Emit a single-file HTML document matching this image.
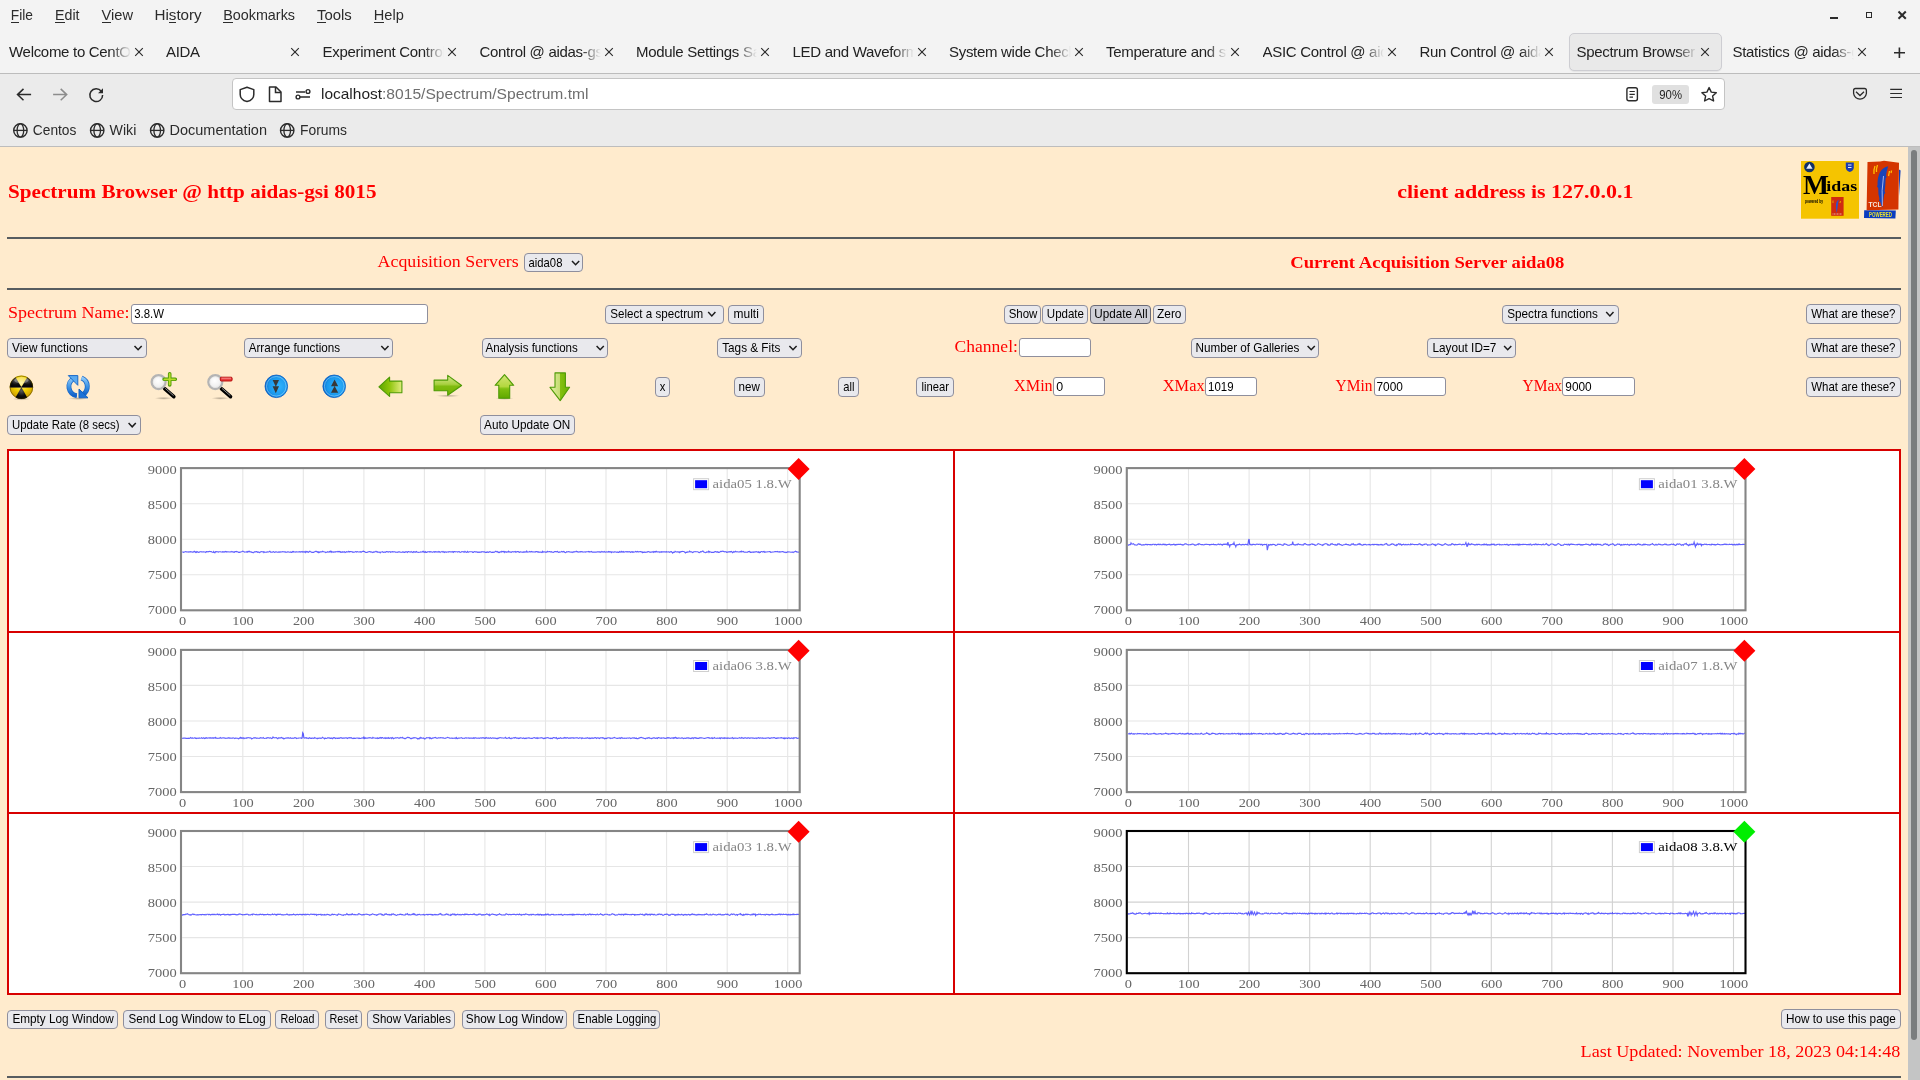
<!DOCTYPE html><html><head><meta charset="utf-8"><style>
*{box-sizing:border-box;margin:0;padding:0}
html,body{width:1920px;height:1080px;overflow:hidden;background:#ffebcd;font-family:"Liberation Sans",sans-serif}
.ab{position:absolute}
.w{position:absolute;background:#e9e9ed;border:1px solid #8f8f9d;border-radius:4px}
.inp{position:absolute;background:#fff;border:1px solid #8f8f9d;border-radius:3px}
.hr{position:absolute;left:7px;width:1894px;height:2px;background:#575c60}
svg{position:absolute;left:0;top:0;overflow:visible;will-change:transform}
</style></head><body>

<div class="ab" style="left:0;top:0;width:1920px;height:73px;background:#f3f3f3"></div>
<div class="ab" style="left:0;top:73px;width:1920px;height:1px;background:#bcbcbc"></div>
<div class="ab" style="left:0;top:74px;width:1920px;height:72px;background:#ebebeb"></div>
<div class="ab" style="left:0;top:146px;width:1920px;height:1px;background:#bdbdbd"></div>
<div class="ab" style="left:10.8px;top:22px;width:8.4px;height:1px;background:#2b2b2b"></div>
<div class="ab" style="left:55.0px;top:22px;width:9.5px;height:1px;background:#2b2b2b"></div>
<div class="ab" style="left:101.5px;top:22px;width:9.8px;height:1px;background:#2b2b2b"></div>
<div class="ab" style="left:168.8px;top:22px;width:7.6px;height:1px;background:#2b2b2b"></div>
<div class="ab" style="left:223.2px;top:22px;width:9.6px;height:1px;background:#2b2b2b"></div>
<div class="ab" style="left:317.0px;top:22px;width:9.1px;height:1px;background:#2b2b2b"></div>
<div class="ab" style="left:373.8px;top:22px;width:10.5px;height:1px;background:#2b2b2b"></div>
<div class="ab" style="left:1830px;top:17px;width:8px;height:2px;background:#2b2b2b"></div>
<div class="ab" style="left:1865.5px;top:12.3px;width:6px;height:6px;border:1.8px solid #2b2b2b"></div>
<svg width="1920" height="30"><path d="M1898.5 11.5L1905.8 18.8M1905.8 11.5L1898.5 18.8" stroke="#2b2b2b" stroke-width="2"/></svg>
<div class="ab" style="left:1568.5px;top:33px;width:153px;height:37.5px;background:#e9e9e9;border:1px solid #cdcdd2;border-radius:5px;box-shadow:0 1px 1px rgba(0,0,0,.06)"></div>
<div class="ab" style="left:9.0px;top:40px;width:122.0px;height:24px;overflow:hidden;white-space:nowrap;font-size:15px;letter-spacing:-0.3px;line-height:24px;color:#222;-webkit-mask-image:linear-gradient(to right,#000 calc(100% - 20px),transparent)">Welcome to CentOS</div>
<svg width="1920" height="80"><path d="M135.2 48.2L142.8 55.8M142.8 48.2L135.2 55.8" stroke="#2b2b2b" stroke-width="1.15"/></svg>
<div class="ab" style="left:166.0px;top:40px;width:121.0px;height:24px;overflow:hidden;white-space:nowrap;font-size:15px;letter-spacing:-0.3px;line-height:24px;color:#222;-webkit-mask-image:linear-gradient(to right,#000 calc(100% - 20px),transparent)">AIDA</div>
<svg width="1920" height="80"><path d="M291.2 48.2L298.8 55.8M298.8 48.2L291.2 55.8" stroke="#2b2b2b" stroke-width="1.15"/></svg>
<div class="ab" style="left:322.5px;top:40px;width:121.5px;height:24px;overflow:hidden;white-space:nowrap;font-size:15px;letter-spacing:-0.3px;line-height:24px;color:#222;-webkit-mask-image:linear-gradient(to right,#000 calc(100% - 20px),transparent)">Experiment Control @</div>
<svg width="1920" height="80"><path d="M448.2 48.2L455.8 55.8M455.8 48.2L448.2 55.8" stroke="#2b2b2b" stroke-width="1.15"/></svg>
<div class="ab" style="left:479.5px;top:40px;width:121.5px;height:24px;overflow:hidden;white-space:nowrap;font-size:15px;letter-spacing:-0.3px;line-height:24px;color:#222;-webkit-mask-image:linear-gradient(to right,#000 calc(100% - 20px),transparent)">Control @ aidas-gsi</div>
<svg width="1920" height="80"><path d="M605.2 48.2L612.8 55.8M612.8 48.2L605.2 55.8" stroke="#2b2b2b" stroke-width="1.15"/></svg>
<div class="ab" style="left:636.0px;top:40px;width:121.0px;height:24px;overflow:hidden;white-space:nowrap;font-size:15px;letter-spacing:-0.3px;line-height:24px;color:#222;-webkit-mask-image:linear-gradient(to right,#000 calc(100% - 20px),transparent)">Module Settings Save</div>
<svg width="1920" height="80"><path d="M761.2 48.2L768.8 55.8M768.8 48.2L761.2 55.8" stroke="#2b2b2b" stroke-width="1.15"/></svg>
<div class="ab" style="left:792.5px;top:40px;width:121.5px;height:24px;overflow:hidden;white-space:nowrap;font-size:15px;letter-spacing:-0.3px;line-height:24px;color:#222;-webkit-mask-image:linear-gradient(to right,#000 calc(100% - 20px),transparent)">LED and Waveform</div>
<svg width="1920" height="80"><path d="M918.2 48.2L925.8 55.8M925.8 48.2L918.2 55.8" stroke="#2b2b2b" stroke-width="1.15"/></svg>
<div class="ab" style="left:949.0px;top:40px;width:122.0px;height:24px;overflow:hidden;white-space:nowrap;font-size:15px;letter-spacing:-0.3px;line-height:24px;color:#222;-webkit-mask-image:linear-gradient(to right,#000 calc(100% - 20px),transparent)">System wide Checks</div>
<svg width="1920" height="80"><path d="M1075.2 48.2L1082.8 55.8M1082.8 48.2L1075.2 55.8" stroke="#2b2b2b" stroke-width="1.15"/></svg>
<div class="ab" style="left:1106.0px;top:40px;width:121.0px;height:24px;overflow:hidden;white-space:nowrap;font-size:15px;letter-spacing:-0.3px;line-height:24px;color:#222;-webkit-mask-image:linear-gradient(to right,#000 calc(100% - 20px),transparent)">Temperature and stat</div>
<svg width="1920" height="80"><path d="M1231.2 48.2L1238.8 55.8M1238.8 48.2L1231.2 55.8" stroke="#2b2b2b" stroke-width="1.15"/></svg>
<div class="ab" style="left:1262.5px;top:40px;width:121.5px;height:24px;overflow:hidden;white-space:nowrap;font-size:15px;letter-spacing:-0.3px;line-height:24px;color:#222;-webkit-mask-image:linear-gradient(to right,#000 calc(100% - 20px),transparent)">ASIC Control @ aidas</div>
<svg width="1920" height="80"><path d="M1388.2 48.2L1395.8 55.8M1395.8 48.2L1388.2 55.8" stroke="#2b2b2b" stroke-width="1.15"/></svg>
<div class="ab" style="left:1419.5px;top:40px;width:121.5px;height:24px;overflow:hidden;white-space:nowrap;font-size:15px;letter-spacing:-0.3px;line-height:24px;color:#222;-webkit-mask-image:linear-gradient(to right,#000 calc(100% - 20px),transparent)">Run Control @ aidas</div>
<svg width="1920" height="80"><path d="M1545.2 48.2L1552.8 55.8M1552.8 48.2L1545.2 55.8" stroke="#2b2b2b" stroke-width="1.15"/></svg>
<div class="ab" style="left:1576.5px;top:40px;width:120.5px;height:24px;overflow:hidden;white-space:nowrap;font-size:15px;letter-spacing:-0.3px;line-height:24px;color:#222;-webkit-mask-image:linear-gradient(to right,#000 calc(100% - 20px),transparent)">Spectrum Browser @</div>
<svg width="1920" height="80"><path d="M1701.2 48.2L1708.8 55.8M1708.8 48.2L1701.2 55.8" stroke="#2b2b2b" stroke-width="1.15"/></svg>
<div class="ab" style="left:1732.5px;top:40px;width:121.5px;height:24px;overflow:hidden;white-space:nowrap;font-size:15px;letter-spacing:-0.3px;line-height:24px;color:#222;-webkit-mask-image:linear-gradient(to right,#000 calc(100% - 20px),transparent)">Statistics @ aidas-gsi</div>
<svg width="1920" height="80"><path d="M1858.2 48.2L1865.8 55.8M1865.8 48.2L1858.2 55.8" stroke="#2b2b2b" stroke-width="1.15"/></svg>

<svg width="1920" height="80"><path d="M1899.4 47.5V58M1894 52.8H1905" stroke="#2b2b2b" stroke-width="1.6"/></svg>
<svg width="1920" height="150"><path d="M31.1 94.6H17.8M23.5 88.9L17.5 94.6L23.5 100.3" fill="none" stroke="#2b2b2b" stroke-width="1.5"/><path d="M53.1 94.6H66.4M60.7 88.9L66.7 94.6L60.7 100.3" fill="none" stroke="#8c8c8c" stroke-width="1.5"/><path d="M101.3 91.3A6.4 6.4 0 1 0 102.6 95" fill="none" stroke="#2b2b2b" stroke-width="1.5"/><path d="M103 88.2V93.2H98Z" fill="#2b2b2b"/></svg>
<div class="ab" style="left:231.5px;top:78.3px;width:1493px;height:31.5px;background:#fff;border:1px solid #c4c4c4;border-radius:4px"></div>
<svg width="1920" height="150"><path d="M247 87.2L253.8 89.6V94.5C253.8 98 251 100.6 247 101.6C243 100.6 240.2 98 240.2 94.5V89.6Z" fill="none" stroke="#2b2b2b" stroke-width="1.5" stroke-linejoin="round"/><path d="M269.5 87H276L281 92V101.5H269.5Z" fill="none" stroke="#2b2b2b" stroke-width="1.5" stroke-linejoin="round"/><path d="M275.5 87V92.5H281" fill="none" stroke="#2b2b2b" stroke-width="1.5"/><path d="M300 97H310M296 92H305" stroke="#2b2b2b" stroke-width="1.5"/><circle cx="298" cy="97" r="1.9" fill="#fff" stroke="#2b2b2b" stroke-width="1.4"/><circle cx="308" cy="91.5" r="1.9" fill="#fff" stroke="#2b2b2b" stroke-width="1.4"/></svg>
<svg width="1920" height="150"><rect x="1626.9" y="87.7" width="10.5" height="13" rx="2" fill="none" stroke="#2b2b2b" stroke-width="1.4"/><path d="M1629.5 91.5H1634.8M1629.5 94.3H1634.8M1629.5 97.1H1633" stroke="#2b2b2b" stroke-width="1.2"/><path d="M1709.1 87.6L1711.3 92.1L1716.3 92.7L1712.6 96.1L1713.6 101L1709.1 98.6L1704.6 101L1705.6 96.1L1701.9 92.7L1706.9 92.1Z" fill="none" stroke="#2b2b2b" stroke-width="1.4" stroke-linejoin="round"/><path d="M1855.5 88.5H1864.5Q1866.4 88.5 1866.4 90.4V93.4A6.45 6.45 0 0 1 1853.6 93.4V90.4Q1853.6 88.5 1855.5 88.5Z" fill="none" stroke="#2b2b2b" stroke-width="1.3" stroke-linejoin="round"/><path d="M1856 91.8L1860 95.5L1864 91.8" fill="none" stroke="#2b2b2b" stroke-width="1.3"/><path d="M1890.2 89.4H1902M1890.2 93.5H1902M1890.2 97.5H1902" stroke="#2b2b2b" stroke-width="1.2"/></svg>
<div class="ab" style="left:1652px;top:84.5px;width:37px;height:19px;background:#e0e0e0;border-radius:3px"></div>
<svg width="1920" height="150"><circle cx="20.4" cy="130.4" r="6.7" fill="none" stroke="#2b2b2b" stroke-width="1.4"/><ellipse cx="20.4" cy="130.4" rx="3.3" ry="6.7" fill="none" stroke="#2b2b2b" stroke-width="1.3"/><path d="M13.7 130.4H27.099999999999998" stroke="#2b2b2b" stroke-width="1.3"/><circle cx="97.2" cy="130.4" r="6.7" fill="none" stroke="#2b2b2b" stroke-width="1.4"/><ellipse cx="97.2" cy="130.4" rx="3.3" ry="6.7" fill="none" stroke="#2b2b2b" stroke-width="1.3"/><path d="M90.5 130.4H103.9" stroke="#2b2b2b" stroke-width="1.3"/><circle cx="157.2" cy="130.4" r="6.7" fill="none" stroke="#2b2b2b" stroke-width="1.4"/><ellipse cx="157.2" cy="130.4" rx="3.3" ry="6.7" fill="none" stroke="#2b2b2b" stroke-width="1.3"/><path d="M150.5 130.4H163.89999999999998" stroke="#2b2b2b" stroke-width="1.3"/><circle cx="287.2" cy="130.4" r="6.7" fill="none" stroke="#2b2b2b" stroke-width="1.4"/><ellipse cx="287.2" cy="130.4" rx="3.3" ry="6.7" fill="none" stroke="#2b2b2b" stroke-width="1.3"/><path d="M280.5 130.4H293.9" stroke="#2b2b2b" stroke-width="1.3"/></svg>
<div class="ab" style="left:1908px;top:147px;width:12px;height:933px;background:#c4c5c5"></div>
<div class="ab" style="left:1911px;top:150px;width:6px;height:890px;background:#7a7d7e;border-radius:3px"></div>
<div class="hr" style="top:237px"></div>
<div class="hr" style="top:288px"></div>
<div class="w" style="left:524.3px;top:253.3px;width:59.1px;height:19.2px;"></div>
<div class="inp" style="left:131.3px;top:304.4px;width:296.4px;height:19.2px;"></div>
<div class="w" style="left:605.3px;top:304.5px;width:118.6px;height:19.1px;"></div>
<div class="w" style="left:728.4px;top:304.5px;width:35.4px;height:19.1px;"></div>
<div class="w" style="left:1004.2px;top:304.5px;width:37.2px;height:19.1px;"></div>
<div class="w" style="left:1042.4px;top:304.5px;width:45.8px;height:19.1px;"></div>
<div class="w" style="left:1089.6px;top:304.5px;width:61.9px;height:19.1px;background:#d0d0d7;border-color:#6b6b78"></div>
<div class="w" style="left:1152.5px;top:304.5px;width:33.1px;height:19.1px;"></div>
<div class="w" style="left:1502.3px;top:304.5px;width:116.5px;height:19.1px;"></div>
<div class="w" style="left:1806.3px;top:304.4px;width:94.4px;height:19.2px;"></div>
<div class="w" style="left:7.4px;top:338.3px;width:139.2px;height:19.4px;"></div>
<div class="w" style="left:244.2px;top:338.3px;width:149.3px;height:19.4px;"></div>
<div class="w" style="left:481.5px;top:338.3px;width:126.9px;height:19.4px;"></div>
<div class="w" style="left:717.4px;top:338.3px;width:84.2px;height:19.4px;"></div>
<div class="inp" style="left:1019.3px;top:338.3px;width:72.2px;height:19.2px;"></div>
<div class="w" style="left:1191.3px;top:338.3px;width:128.1px;height:19.4px;"></div>
<div class="w" style="left:1427.4px;top:338.3px;width:88.9px;height:19.4px;"></div>
<div class="w" style="left:1806.3px;top:338.4px;width:94.4px;height:19.3px;"></div>
<div class="w" style="left:655.1px;top:377.2px;width:14.5px;height:19.4px;"></div>
<div class="w" style="left:734.2px;top:377.2px;width:30.4px;height:19.4px;"></div>
<div class="w" style="left:838.2px;top:377.2px;width:20.4px;height:19.4px;"></div>
<div class="w" style="left:916.2px;top:377.2px;width:37.5px;height:19.4px;"></div>
<div class="inp" style="left:1053.4px;top:377.3px;width:51.4px;height:19.1px;"></div>
<div class="inp" style="left:1205.3px;top:377.3px;width:51.3px;height:19.1px;"></div>
<div class="inp" style="left:1373.6px;top:377.3px;width:72.2px;height:19.1px;"></div>
<div class="inp" style="left:1562.3px;top:377.3px;width:73.1px;height:19.1px;"></div>
<div class="w" style="left:1806.3px;top:377.3px;width:94.4px;height:19.3px;"></div>
<div class="w" style="left:7.2px;top:415.4px;width:133.5px;height:19.2px;"></div>
<div class="w" style="left:480.3px;top:415.2px;width:94.4px;height:19.4px;"></div>

<div class="ab" style="left:7px;top:449px;width:1894px;height:546px;background:#fff;border:2px solid #d80000"></div>
<div class="ab" style="left:953px;top:449px;width:2px;height:546px;background:#d80000"></div>
<div class="ab" style="left:7px;top:631px;width:1894px;height:2px;background:#d80000"></div>
<div class="ab" style="left:7px;top:812px;width:1894px;height:2px;background:#d80000"></div>
<svg width="1920" height="1080" font-family="Liberation Serif" font-size="11.8" fill="#666"><path d="M182.2 503.7H799.2" stroke="#e6e6e6" stroke-width="1.1"/><path d="M182.2 539.2H799.2" stroke="#e6e6e6" stroke-width="1.1"/><path d="M182.2 574.8H799.2" stroke="#e6e6e6" stroke-width="1.1"/><path d="M242.8 468.1V610.3" stroke="#e6e6e6" stroke-width="1.1"/><path d="M303.3 468.1V610.3" stroke="#e6e6e6" stroke-width="1.1"/><path d="M363.9 468.1V610.3" stroke="#e6e6e6" stroke-width="1.1"/><path d="M424.4 468.1V610.3" stroke="#e6e6e6" stroke-width="1.1"/><path d="M484.9 468.1V610.3" stroke="#e6e6e6" stroke-width="1.1"/><path d="M545.5 468.1V610.3" stroke="#e6e6e6" stroke-width="1.1"/><path d="M606.0 468.1V610.3" stroke="#e6e6e6" stroke-width="1.1"/><path d="M666.6 468.1V610.3" stroke="#e6e6e6" stroke-width="1.1"/><path d="M727.2 468.1V610.3" stroke="#e6e6e6" stroke-width="1.1"/><path d="M787.7 468.1V610.3" stroke="#e6e6e6" stroke-width="1.1"/><path d="M182.2 552.0 182.8 552.0 183.4 552.3 184.0 552.1 184.6 552.0 185.2 551.8 185.8 551.6 186.4 552.0 187.0 551.9 187.6 552.0 188.3 551.9 188.9 552.1 189.5 551.8 190.1 551.8 190.7 551.7 191.3 552.0 191.9 551.8 192.5 552.1 193.1 552.2 193.7 551.7 194.3 551.2 194.9 551.8 195.5 552.4 196.1 551.7 196.7 552.3 197.3 551.6 197.9 551.9 198.5 552.3 199.2 552.2 199.8 551.9 200.4 551.8 201.0 551.7 201.6 552.0 202.2 551.8 202.8 552.0 203.4 551.9 204.0 551.9 204.6 552.0 205.2 552.0 205.8 552.4 206.4 551.6 207.0 551.5 207.6 551.9 208.2 551.6 208.8 551.9 209.4 551.4 210.1 551.5 210.7 551.6 211.3 551.6 211.9 552.0 212.5 552.3 213.1 552.4 213.7 551.6 214.3 552.5 214.9 552.8 215.5 551.7 216.1 551.8 216.7 551.7 217.3 551.8 217.9 551.9 218.5 552.1 219.1 551.8 219.7 551.7 220.3 551.7 221.0 551.9 221.6 552.0 222.2 552.1 222.8 551.7 223.4 551.9 224.0 552.1 224.6 551.9 225.2 551.5 225.8 551.8 226.4 551.6 227.0 552.0 227.6 551.7 228.2 551.7 228.8 552.0 229.4 552.0 230.0 551.9 230.6 551.9 231.2 552.0 231.9 551.5 232.5 552.0 233.1 551.9 233.7 552.1 234.3 552.3 234.9 551.6 235.5 551.6 236.1 551.9 236.7 551.4 237.3 551.7 237.9 552.0 238.5 552.3 239.1 552.1 239.7 552.4 240.3 552.1 240.9 552.0 241.5 551.7 242.1 551.5 242.8 551.1 243.4 551.5 244.0 551.7 244.6 552.1 245.2 552.0 245.8 552.0 246.4 552.2 247.0 551.6 247.6 552.2 248.2 551.3 248.8 551.7 249.4 551.2 250.0 551.9 250.6 551.8 251.2 551.8 251.8 552.4 252.4 552.3 253.0 552.7 253.6 552.6 254.3 551.9 254.9 551.9 255.5 551.9 256.1 551.6 256.7 551.6 257.3 552.2 257.9 551.9 258.5 552.1 259.1 552.4 259.7 552.6 260.3 552.0 260.9 551.7 261.5 551.6 262.1 551.7 262.7 551.8 263.3 551.7 263.9 552.5 264.5 551.9 265.2 552.2 265.8 552.2 266.4 552.1 267.0 552.1 267.6 551.8 268.2 552.0 268.8 552.0 269.4 551.3 270.0 551.3 270.6 552.1 271.2 552.1 271.8 552.2 272.4 552.2 273.0 551.8 273.6 551.6 274.2 552.3 274.8 552.4 275.4 551.8 276.1 552.0 276.7 551.9 277.3 552.2 277.9 552.2 278.5 551.9 279.1 552.2 279.7 551.9 280.3 552.1 280.9 551.8 281.5 552.0 282.1 551.9 282.7 551.6 283.3 551.7 283.9 551.8 284.5 551.8 285.1 552.2 285.7 551.9 286.3 552.2 287.0 552.1 287.6 551.8 288.2 552.0 288.8 551.9 289.4 552.2 290.0 552.2 290.6 551.9 291.2 552.3 291.8 552.3 292.4 551.5 293.0 552.0 293.6 551.5 294.2 552.0 294.8 552.0 295.4 552.1 296.0 551.8 296.6 551.8 297.2 551.9 297.9 552.0 298.5 551.9 299.1 552.0 299.7 551.7 300.3 551.9 300.9 552.2 301.5 551.8 302.1 551.5 302.7 552.1 303.3 551.9 303.9 551.9 304.5 552.1 305.1 551.5 305.7 552.5 306.3 551.8 306.9 551.5 307.5 551.8 308.1 552.3 308.7 552.2 309.4 551.3 310.0 551.4 310.6 551.8 311.2 552.0 311.8 552.3 312.4 552.3 313.0 552.3 313.6 552.3 314.2 552.0 314.8 551.7 315.4 551.4 316.0 551.1 316.6 551.6 317.2 552.0 317.8 551.8 318.4 552.6 319.0 551.9 319.6 552.4 320.3 551.8 320.9 551.8 321.5 551.9 322.1 551.7 322.7 551.2 323.3 551.7 323.9 551.7 324.5 552.0 325.1 552.0 325.7 552.5 326.3 552.2 326.9 552.2 327.5 551.8 328.1 552.2 328.7 552.0 329.3 551.5 329.9 552.0 330.5 551.2 331.2 552.3 331.8 551.4 332.4 551.9 333.0 552.2 333.6 551.9 334.2 552.2 334.8 551.8 335.4 552.0 336.0 551.6 336.6 551.7 337.2 551.9 337.8 551.5 338.4 551.8 339.0 551.4 339.6 551.6 340.2 552.2 340.8 551.7 341.4 552.1 342.1 552.3 342.7 551.7 343.3 552.1 343.9 552.0 344.5 551.7 345.1 552.5 345.7 552.3 346.3 551.8 346.9 551.7 347.5 552.0 348.1 552.0 348.7 551.3 349.3 552.0 349.9 551.6 350.5 551.6 351.1 551.5 351.7 551.7 352.3 551.9 353.0 552.3 353.6 552.0 354.2 552.2 354.8 552.0 355.4 551.6 356.0 551.7 356.6 552.1 357.2 551.7 357.8 551.8 358.4 552.0 359.0 552.0 359.6 551.9 360.2 551.7 360.8 552.1 361.4 552.1 362.0 551.6 362.6 551.5 363.2 551.1 363.9 551.4 364.5 551.6 365.1 552.1 365.7 552.4 366.3 552.5 366.9 552.4 367.5 552.3 368.1 551.9 368.7 551.8 369.3 551.5 369.9 551.6 370.5 552.0 371.1 551.8 371.7 552.1 372.3 552.2 372.9 552.5 373.5 552.0 374.1 552.2 374.7 551.9 375.4 551.8 376.0 551.2 376.6 551.8 377.2 551.7 377.8 552.3 378.4 552.0 379.0 552.2 379.6 552.1 380.2 552.8 380.8 552.0 381.4 552.0 382.0 552.0 382.6 551.7 383.2 552.2 383.8 552.4 384.4 552.1 385.0 552.0 385.6 552.3 386.3 551.5 386.9 551.6 387.5 551.8 388.1 552.2 388.7 551.9 389.3 551.7 389.9 551.6 390.5 552.2 391.1 551.9 391.7 552.0 392.3 551.7 392.9 551.9 393.5 551.9 394.1 551.7 394.7 551.7 395.3 552.2 395.9 552.0 396.5 552.2 397.2 552.1 397.8 552.4 398.4 551.9 399.0 551.7 399.6 552.0 400.2 552.1 400.8 552.2 401.4 552.2 402.0 552.4 402.6 551.8 403.2 551.9 403.8 552.4 404.4 552.2 405.0 552.4 405.6 551.8 406.2 551.6 406.8 552.1 407.4 552.5 408.1 551.6 408.7 551.5 409.3 551.9 409.9 552.0 410.5 552.1 411.1 551.6 411.7 552.1 412.3 552.3 412.9 552.6 413.5 551.6 414.1 551.7 414.7 552.1 415.3 551.9 415.9 552.1 416.5 551.5 417.1 551.9 417.7 552.2 418.3 552.4 419.0 552.3 419.6 552.2 420.2 552.1 420.8 551.9 421.4 552.0 422.0 552.1 422.6 551.6 423.2 551.3 423.8 552.1 424.4 551.9 425.0 552.4 425.6 551.7 426.2 552.4 426.8 552.4 427.4 551.9 428.0 551.9 428.6 551.8 429.2 551.7 429.8 552.1 430.5 551.7 431.1 552.0 431.7 551.8 432.3 552.2 432.9 552.2 433.5 551.8 434.1 551.6 434.7 552.2 435.3 551.6 435.9 551.8 436.5 551.8 437.1 552.1 437.7 551.8 438.3 552.1 438.9 551.5 439.5 551.8 440.1 552.4 440.7 551.9 441.4 551.7 442.0 551.5 442.6 551.9 443.2 552.1 443.8 551.6 444.4 552.4 445.0 552.0 445.6 551.8 446.2 552.3 446.8 552.0 447.4 552.0 448.0 551.8 448.6 552.1 449.2 551.7 449.8 551.8 450.4 551.9 451.0 551.8 451.6 551.8 452.3 552.0 452.9 551.6 453.5 552.3 454.1 551.5 454.7 551.6 455.3 551.8 455.9 551.7 456.5 551.7 457.1 551.7 457.7 552.0 458.3 551.7 458.9 551.6 459.5 551.8 460.1 552.4 460.7 552.3 461.3 552.0 461.9 551.6 462.5 551.7 463.2 551.6 463.8 552.1 464.4 552.2 465.0 551.4 465.6 551.9 466.2 552.4 466.8 552.3 467.4 551.5 468.0 552.1 468.6 552.1 469.2 551.7 469.8 551.7 470.4 551.7 471.0 551.7 471.6 551.8 472.2 551.9 472.8 552.3 473.4 552.3 474.1 551.8 474.7 551.7 475.3 551.8 475.9 552.1 476.5 551.9 477.1 551.9 477.7 552.4 478.3 552.4 478.9 551.9 479.5 552.3 480.1 552.1 480.7 552.1 481.3 552.2 481.9 551.6 482.5 551.8 483.1 551.9 483.7 551.9 484.3 551.8 484.9 552.1 485.6 552.3 486.2 552.2 486.8 552.3 487.4 551.9 488.0 552.1 488.6 552.3 489.2 552.0 489.8 551.7 490.4 551.8 491.0 552.2 491.6 552.3 492.2 552.3 492.8 552.2 493.4 552.3 494.0 552.0 494.6 552.1 495.2 551.6 495.8 551.2 496.5 551.8 497.1 551.9 497.7 551.5 498.3 552.6 498.9 552.3 499.5 552.5 500.1 551.9 500.7 551.9 501.3 552.1 501.9 551.3 502.5 551.7 503.1 551.6 503.7 551.5 504.3 552.5 504.9 551.5 505.5 552.0 506.1 551.8 506.7 552.2 507.4 551.8 508.0 552.0 508.6 551.2 509.2 552.0 509.8 551.8 510.4 552.1 511.0 552.0 511.6 552.3 512.2 551.7 512.8 551.8 513.4 551.9 514.0 551.9 514.6 551.8 515.2 551.5 515.8 552.3 516.4 551.9 517.0 551.5 517.6 551.6 518.3 551.5 518.9 552.2 519.5 552.3 520.1 551.9 520.7 551.8 521.3 552.0 521.9 552.2 522.5 552.1 523.1 552.3 523.7 551.9 524.3 551.8 524.9 552.2 525.5 551.8 526.1 552.0 526.7 551.1 527.3 552.1 527.9 552.0 528.5 552.0 529.2 551.9 529.8 551.4 530.4 551.9 531.0 552.0 531.6 551.5 532.2 552.0 532.8 551.9 533.4 552.0 534.0 551.8 534.6 552.0 535.2 552.2 535.8 551.6 536.4 551.6 537.0 551.6 537.6 552.1 538.2 551.7 538.8 552.3 539.4 552.1 540.1 552.1 540.7 552.1 541.3 552.2 541.9 552.5 542.5 551.4 543.1 552.2 543.7 551.8 544.3 551.8 544.9 552.0 545.5 552.1 546.1 552.1 546.7 552.1 547.3 551.4 547.9 551.9 548.5 551.7 549.1 551.6 549.7 551.5 550.3 551.8 550.9 552.1 551.6 551.7 552.2 552.2 552.8 552.2 553.4 552.4 554.0 552.0 554.6 551.6 555.2 551.6 555.8 551.6 556.4 551.9 557.0 551.6 557.6 551.4 558.2 552.3 558.8 552.4 559.4 551.9 560.0 552.2 560.6 552.0 561.2 551.7 561.8 551.4 562.5 551.8 563.1 551.8 563.7 551.5 564.3 551.8 564.9 552.5 565.5 552.6 566.1 552.2 566.7 551.7 567.3 552.0 567.9 551.8 568.5 551.7 569.1 551.9 569.7 551.8 570.3 552.2 570.9 552.0 571.5 552.0 572.1 552.5 572.7 552.1 573.4 552.1 574.0 551.7 574.6 551.9 575.2 551.7 575.8 551.6 576.4 551.2 577.0 551.8 577.6 551.6 578.2 552.0 578.8 552.1 579.4 551.8 580.0 551.8 580.6 551.6 581.2 551.8 581.8 551.5 582.4 551.7 583.0 552.1 583.6 552.0 584.3 552.0 584.9 551.8 585.5 552.1 586.1 551.9 586.7 551.8 587.3 551.7 587.9 551.7 588.5 551.5 589.1 552.1 589.7 551.7 590.3 551.9 590.9 551.7 591.5 551.5 592.1 552.1 592.7 552.0 593.3 552.1 593.9 552.1 594.5 552.1 595.2 552.1 595.8 552.0 596.4 552.2 597.0 551.8 597.6 551.9 598.2 551.9 598.8 551.9 599.4 552.1 600.0 551.7 600.6 552.3 601.2 552.1 601.8 551.5 602.4 551.8 603.0 552.1 603.6 552.0 604.2 551.5 604.8 552.0 605.4 552.1 606.0 552.0 606.7 551.8 607.3 552.0 607.9 552.2 608.5 551.6 609.1 552.0 609.7 551.7 610.3 552.0 610.9 551.7 611.5 552.5 612.1 551.8 612.7 552.0 613.3 552.1 613.9 552.2 614.5 551.9 615.1 551.8 615.7 552.0 616.3 552.0 616.9 552.4 617.6 552.0 618.2 552.5 618.8 552.4 619.4 551.6 620.0 552.0 620.6 552.1 621.2 551.3 621.8 552.0 622.4 551.6 623.0 552.1 623.6 551.5 624.2 552.1 624.8 552.0 625.4 551.8 626.0 551.7 626.6 551.8 627.2 551.7 627.8 551.8 628.5 551.8 629.1 551.7 629.7 551.8 630.3 552.3 630.9 552.1 631.5 551.9 632.1 551.7 632.7 552.2 633.3 551.9 633.9 552.1 634.5 552.0 635.1 551.8 635.7 551.5 636.3 551.8 636.9 551.8 637.5 551.5 638.1 551.8 638.7 551.8 639.4 551.7 640.0 551.5 640.6 551.6 641.2 551.8 641.8 551.8 642.4 552.6 643.0 552.0 643.6 552.5 644.2 552.4 644.8 552.0 645.4 552.3 646.0 552.2 646.6 552.1 647.2 552.1 647.8 551.6 648.4 551.6 649.0 551.7 649.6 552.1 650.3 552.0 650.9 552.4 651.5 552.0 652.1 551.9 652.7 551.9 653.3 552.4 653.9 551.5 654.5 552.0 655.1 551.5 655.7 552.0 656.3 551.4 656.9 552.0 657.5 551.9 658.1 552.0 658.7 551.9 659.3 551.9 659.9 552.4 660.5 551.9 661.2 551.6 661.8 552.3 662.4 551.8 663.0 551.8 663.6 551.8 664.2 551.9 664.8 551.9 665.4 551.9 666.0 552.1 666.6 551.6 667.2 552.0 667.8 552.0 668.4 551.9 669.0 551.9 669.6 552.4 670.2 552.1 670.8 551.6 671.4 551.6 672.0 552.3 672.7 553.1 673.3 552.1 673.9 552.3 674.5 552.2 675.1 551.3 675.7 551.7 676.3 552.0 676.9 551.8 677.5 551.8 678.1 551.8 678.7 552.1 679.3 552.6 679.9 551.8 680.5 552.1 681.1 551.6 681.7 551.6 682.3 551.4 682.9 551.5 683.6 551.5 684.2 551.7 684.8 552.2 685.4 552.9 686.0 552.3 686.6 552.3 687.2 551.9 687.8 552.1 688.4 552.0 689.0 551.9 689.6 551.1 690.2 551.7 690.8 551.8 691.4 551.8 692.0 552.1 692.6 552.6 693.2 552.3 693.8 551.8 694.5 551.7 695.1 551.6 695.7 551.7 696.3 551.7 696.9 551.7 697.5 551.7 698.1 551.9 698.7 552.5 699.3 552.6 699.9 552.2 700.5 551.7 701.1 551.9 701.7 551.8 702.3 551.3 702.9 551.0 703.5 551.8 704.1 552.2 704.7 552.2 705.4 552.7 706.0 552.4 706.6 552.0 707.2 552.2 707.8 551.9 708.4 551.2 709.0 552.4 709.6 551.5 710.2 552.0 710.8 552.0 711.4 552.4 712.0 552.4 712.6 552.4 713.2 552.3 713.8 552.3 714.4 551.9 715.0 551.5 715.6 551.5 716.3 551.9 716.9 552.1 717.5 551.8 718.1 552.4 718.7 552.2 719.3 552.3 719.9 551.9 720.5 551.4 721.1 551.6 721.7 551.4 722.3 551.1 722.9 551.4 723.5 551.4 724.1 551.6 724.7 551.9 725.3 551.8 725.9 551.6 726.5 552.3 727.2 552.0 727.8 552.1 728.4 552.0 729.0 551.7 729.6 551.8 730.2 551.6 730.8 551.8 731.4 551.4 732.0 552.0 732.6 552.7 733.2 552.4 733.8 551.6 734.4 552.1 735.0 551.7 735.6 551.3 736.2 551.9 736.8 551.7 737.4 551.7 738.0 551.9 738.7 552.0 739.3 551.9 739.9 551.9 740.5 551.5 741.1 552.0 741.7 551.2 742.3 551.7 742.9 551.7 743.5 551.4 744.1 552.2 744.7 552.2 745.3 552.1 745.9 552.2 746.5 552.2 747.1 552.0 747.7 552.1 748.3 551.5 748.9 551.6 749.6 551.4 750.2 552.3 750.8 552.1 751.4 552.4 752.0 552.1 752.6 552.1 753.2 552.4 753.8 552.0 754.4 552.2 755.0 551.8 755.6 551.8 756.2 551.9 756.8 551.6 757.4 552.0 758.0 552.3 758.6 551.9 759.2 552.7 759.8 552.2 760.5 552.3 761.1 551.5 761.7 551.5 762.3 551.8 762.9 552.1 763.5 551.5 764.1 551.4 764.7 552.3 765.3 552.1 765.9 551.8 766.5 552.0 767.1 552.0 767.7 551.8 768.3 551.7 768.9 551.7 769.5 551.5 770.1 551.6 770.7 552.4 771.4 552.2 772.0 552.1 772.6 552.0 773.2 552.0 773.8 552.0 774.4 551.7 775.0 551.6 775.6 551.6 776.2 551.6 776.8 551.7 777.4 551.5 778.0 551.9 778.6 552.0 779.2 551.7 779.8 552.1 780.4 551.9 781.0 551.9 781.6 551.8 782.3 551.5 782.9 551.6 783.5 551.9 784.1 552.1 784.7 552.4 785.3 552.1 785.9 552.6 786.5 552.4 787.1 552.1 787.7 551.9 788.3 552.0 788.9 551.8 789.5 552.0 790.1 552.0 790.7 552.2 791.3 552.2 791.9 552.0 792.5 552.1 793.1 552.5 793.8 552.0 794.4 552.0 795.0 551.4 795.6 551.1 796.2 551.8 796.8 551.6 797.4 552.0 798.0 552.2 798.6 552.2 799.2 551.7" fill="none" stroke="#0000ff" stroke-opacity="0.62" stroke-width="1.15"/><rect x="181.0" y="468.1" width="618.7" height="142.2" fill="none" stroke="#858585" stroke-width="2.1"/><text x="147.8" y="473.9" textLength="28.9" lengthAdjust="spacingAndGlyphs">9000</text><text x="147.8" y="508.9" textLength="28.9" lengthAdjust="spacingAndGlyphs">8500</text><text x="147.8" y="543.9" textLength="28.9" lengthAdjust="spacingAndGlyphs">8000</text><text x="147.8" y="578.9" textLength="28.9" lengthAdjust="spacingAndGlyphs">7500</text><text x="147.8" y="613.9" textLength="28.9" lengthAdjust="spacingAndGlyphs">7000</text><text x="178.9" y="624.9" textLength="7.2" lengthAdjust="spacingAndGlyphs">0</text><text x="232.3" y="624.9" textLength="21.5" lengthAdjust="spacingAndGlyphs">100</text><text x="292.9" y="624.9" textLength="21.5" lengthAdjust="spacingAndGlyphs">200</text><text x="353.4" y="624.9" textLength="21.5" lengthAdjust="spacingAndGlyphs">300</text><text x="414.0" y="624.9" textLength="21.5" lengthAdjust="spacingAndGlyphs">400</text><text x="474.5" y="624.9" textLength="21.5" lengthAdjust="spacingAndGlyphs">500</text><text x="535.1" y="624.9" textLength="21.5" lengthAdjust="spacingAndGlyphs">600</text><text x="595.6" y="624.9" textLength="21.5" lengthAdjust="spacingAndGlyphs">700</text><text x="656.2" y="624.9" textLength="21.5" lengthAdjust="spacingAndGlyphs">800</text><text x="716.7" y="624.9" textLength="21.5" lengthAdjust="spacingAndGlyphs">900</text><text x="773.7" y="624.9" textLength="28.6" lengthAdjust="spacingAndGlyphs">1000</text><rect x="693.6" y="478.7" width="15" height="11" fill="#fff" stroke="#cfcfcf" stroke-width="1"/><rect x="695.1" y="480.2" width="12" height="8" fill="#0000ff"/><text x="712.5" y="488.1" fill="#858585" textLength="79.1" lengthAdjust="spacingAndGlyphs">aida05 1.8.W</text><path d="M798.6 457.9L809.6 468.9L798.6 479.9L787.6 468.9Z" fill="#ff0000"/></svg>
<svg width="1920" height="1080" font-family="Liberation Serif" font-size="11.8" fill="#666"><path d="M1128.0 503.7H1745.0" stroke="#e6e6e6" stroke-width="1.1"/><path d="M1128.0 539.2H1745.0" stroke="#e6e6e6" stroke-width="1.1"/><path d="M1128.0 574.8H1745.0" stroke="#e6e6e6" stroke-width="1.1"/><path d="M1188.5 468.1V610.3" stroke="#e6e6e6" stroke-width="1.1"/><path d="M1249.1 468.1V610.3" stroke="#e6e6e6" stroke-width="1.1"/><path d="M1309.7 468.1V610.3" stroke="#e6e6e6" stroke-width="1.1"/><path d="M1370.2 468.1V610.3" stroke="#e6e6e6" stroke-width="1.1"/><path d="M1430.8 468.1V610.3" stroke="#e6e6e6" stroke-width="1.1"/><path d="M1491.3 468.1V610.3" stroke="#e6e6e6" stroke-width="1.1"/><path d="M1551.8 468.1V610.3" stroke="#e6e6e6" stroke-width="1.1"/><path d="M1612.4 468.1V610.3" stroke="#e6e6e6" stroke-width="1.1"/><path d="M1673.0 468.1V610.3" stroke="#e6e6e6" stroke-width="1.1"/><path d="M1733.5 468.1V610.3" stroke="#e6e6e6" stroke-width="1.1"/><path d="M1128.0 544.5 1128.6 545.2 1129.2 544.7 1129.8 544.6 1130.4 544.6 1131.0 542.9 1131.6 544.0 1132.2 544.0 1132.8 544.1 1133.4 543.7 1134.1 544.4 1134.7 544.9 1135.3 545.0 1135.9 544.8 1136.5 545.2 1137.1 544.9 1137.7 544.5 1138.3 543.9 1138.9 543.9 1139.5 544.3 1140.1 544.2 1140.7 544.6 1141.3 544.9 1141.9 545.1 1142.5 544.9 1143.1 545.0 1143.7 544.7 1144.3 544.8 1145.0 544.6 1145.6 544.4 1146.2 544.4 1146.8 544.6 1147.4 544.8 1148.0 544.4 1148.6 544.5 1149.2 544.6 1149.8 544.5 1150.4 544.9 1151.0 544.4 1151.6 544.9 1152.2 544.7 1152.8 544.2 1153.4 544.2 1154.0 544.2 1154.6 544.7 1155.2 544.3 1155.9 544.6 1156.5 545.0 1157.1 544.5 1157.7 544.4 1158.3 544.6 1158.9 544.1 1159.5 544.7 1160.1 544.7 1160.7 544.3 1161.3 544.7 1161.9 544.7 1162.5 544.6 1163.1 544.0 1163.7 544.4 1164.3 544.7 1164.9 544.1 1165.5 544.4 1166.1 545.1 1166.8 544.5 1167.4 544.6 1168.0 544.5 1168.6 544.3 1169.2 544.4 1169.8 544.2 1170.4 544.8 1171.0 544.8 1171.6 544.6 1172.2 544.5 1172.8 544.7 1173.4 544.4 1174.0 544.2 1174.6 544.8 1175.2 544.7 1175.8 545.0 1176.4 544.5 1177.0 544.7 1177.7 544.4 1178.3 544.3 1178.9 544.3 1179.5 544.4 1180.1 544.5 1180.7 544.2 1181.3 544.7 1181.9 544.6 1182.5 545.0 1183.1 544.7 1183.7 544.9 1184.3 544.4 1184.9 543.8 1185.5 543.9 1186.1 543.9 1186.7 544.2 1187.3 544.5 1187.9 544.7 1188.5 544.9 1189.2 544.8 1189.8 544.7 1190.4 544.6 1191.0 544.6 1191.6 544.2 1192.2 544.1 1192.8 544.0 1193.4 544.2 1194.0 544.5 1194.6 545.1 1195.2 544.9 1195.8 545.2 1196.4 545.0 1197.0 544.6 1197.6 544.2 1198.2 544.7 1198.8 543.7 1199.4 543.9 1200.1 544.2 1200.7 544.5 1201.3 544.6 1201.9 544.6 1202.5 544.5 1203.1 544.7 1203.7 544.8 1204.3 544.7 1204.9 544.4 1205.5 544.5 1206.1 544.1 1206.7 544.5 1207.3 544.5 1207.9 544.4 1208.5 544.5 1209.1 544.6 1209.7 545.0 1210.3 544.5 1211.0 544.6 1211.6 544.4 1212.2 544.5 1212.8 544.4 1213.4 544.2 1214.0 544.6 1214.6 544.6 1215.2 544.6 1215.8 544.6 1216.4 544.8 1217.0 544.7 1217.6 544.4 1218.2 544.0 1218.8 544.4 1219.4 544.6 1220.0 544.2 1220.6 544.1 1221.2 544.7 1221.9 544.4 1222.5 545.2 1223.1 544.5 1223.7 544.2 1224.3 544.4 1224.9 544.2 1225.5 544.3 1226.1 544.0 1226.7 544.5 1227.3 544.9 1227.9 542.2 1228.5 544.8 1229.1 544.8 1229.7 546.6 1230.3 544.8 1230.9 544.6 1231.5 544.6 1232.1 544.5 1232.8 543.9 1233.4 544.3 1234.0 542.7 1234.6 544.8 1235.2 545.1 1235.8 546.7 1236.4 545.0 1237.0 544.6 1237.6 544.8 1238.2 544.5 1238.8 544.6 1239.4 544.0 1240.0 544.6 1240.6 544.8 1241.2 545.1 1241.8 544.5 1242.4 544.6 1243.0 544.3 1243.7 544.6 1244.3 544.8 1244.9 544.5 1245.5 544.3 1246.1 544.3 1246.7 544.7 1247.3 544.5 1247.9 544.9 1248.5 540.7 1249.1 539.0 1249.7 544.5 1250.3 544.8 1250.9 544.2 1251.5 544.8 1252.1 544.8 1252.7 544.4 1253.3 544.3 1253.9 544.4 1254.5 544.5 1255.2 544.8 1255.8 544.5 1256.4 544.1 1257.0 544.4 1257.6 544.1 1258.2 544.5 1258.8 544.4 1259.4 544.3 1260.0 544.1 1260.6 544.8 1261.2 544.5 1261.8 544.3 1262.4 545.3 1263.0 544.7 1263.6 544.6 1264.2 544.6 1264.8 544.4 1265.4 544.5 1266.1 544.6 1266.7 544.3 1267.3 550.1 1267.9 547.7 1268.5 544.7 1269.1 544.8 1269.7 545.2 1270.3 544.5 1270.9 544.8 1271.5 544.7 1272.1 544.9 1272.7 544.3 1273.3 544.3 1273.9 544.5 1274.5 544.6 1275.1 544.9 1275.7 545.5 1276.3 545.3 1277.0 545.1 1277.6 544.3 1278.2 544.1 1278.8 544.4 1279.4 544.5 1280.0 544.2 1280.6 544.5 1281.2 544.7 1281.8 544.9 1282.4 545.1 1283.0 545.4 1283.6 544.9 1284.2 543.8 1284.8 544.1 1285.4 544.0 1286.0 544.2 1286.6 544.4 1287.2 545.0 1287.9 545.1 1288.5 545.2 1289.1 545.4 1289.7 545.1 1290.3 544.8 1290.9 544.6 1291.5 544.7 1292.1 544.3 1292.7 541.5 1293.3 544.3 1293.9 544.6 1294.5 544.8 1295.1 544.6 1295.7 545.0 1296.3 544.8 1296.9 544.4 1297.5 544.7 1298.1 543.8 1298.8 544.3 1299.4 544.6 1300.0 544.3 1300.6 544.7 1301.2 544.7 1301.8 544.9 1302.4 544.8 1303.0 544.8 1303.6 544.9 1304.2 543.7 1304.8 543.9 1305.4 543.6 1306.0 544.2 1306.6 544.4 1307.2 544.8 1307.8 544.9 1308.4 544.9 1309.0 544.6 1309.7 544.9 1310.3 544.7 1310.9 544.3 1311.5 544.0 1312.1 543.9 1312.7 544.3 1313.3 544.3 1313.9 544.4 1314.5 544.9 1315.1 545.1 1315.7 545.4 1316.3 544.9 1316.9 544.7 1317.5 544.4 1318.1 543.7 1318.7 543.8 1319.3 544.1 1319.9 544.3 1320.5 544.5 1321.2 544.8 1321.8 545.0 1322.4 545.4 1323.0 544.7 1323.6 544.8 1324.2 544.1 1324.8 544.0 1325.4 543.8 1326.0 543.6 1326.6 544.0 1327.2 544.1 1327.8 545.0 1328.4 544.7 1329.0 545.4 1329.6 545.1 1330.2 544.9 1330.8 544.0 1331.4 544.2 1332.1 543.6 1332.7 544.3 1333.3 544.5 1333.9 544.4 1334.5 544.8 1335.1 545.1 1335.7 544.5 1336.3 544.9 1336.9 545.2 1337.5 544.0 1338.1 544.3 1338.7 543.8 1339.3 543.8 1339.9 544.6 1340.5 544.6 1341.1 544.8 1341.7 545.3 1342.3 545.4 1343.0 545.1 1343.6 544.7 1344.2 544.7 1344.8 544.5 1345.4 544.2 1346.0 544.3 1346.6 544.1 1347.2 544.6 1347.8 544.6 1348.4 544.6 1349.0 545.1 1349.6 545.1 1350.2 545.0 1350.8 545.1 1351.4 544.0 1352.0 544.0 1352.6 544.3 1353.2 543.6 1353.9 544.7 1354.5 544.8 1355.1 544.6 1355.7 545.0 1356.3 545.0 1356.9 544.7 1357.5 544.6 1358.1 543.9 1358.7 544.3 1359.3 543.6 1359.9 544.5 1360.5 544.0 1361.1 544.9 1361.7 544.9 1362.3 545.2 1362.9 545.2 1363.5 544.5 1364.1 544.7 1364.8 544.4 1365.4 544.3 1366.0 544.8 1366.6 544.9 1367.2 544.8 1367.8 544.7 1368.4 544.7 1369.0 544.4 1369.6 544.5 1370.2 545.1 1370.8 544.7 1371.4 544.7 1372.0 544.5 1372.6 544.4 1373.2 544.8 1373.8 544.4 1374.4 544.6 1375.0 544.4 1375.6 544.5 1376.3 544.3 1376.9 544.8 1377.5 544.4 1378.1 545.0 1378.7 544.7 1379.3 544.8 1379.9 544.7 1380.5 544.4 1381.1 544.8 1381.7 544.4 1382.3 545.0 1382.9 544.8 1383.5 545.0 1384.1 544.7 1384.7 544.1 1385.3 543.8 1385.9 544.0 1386.5 543.5 1387.2 544.4 1387.8 545.1 1388.4 545.0 1389.0 545.1 1389.6 545.1 1390.2 545.0 1390.8 544.4 1391.4 544.5 1392.0 543.7 1392.6 543.9 1393.2 544.4 1393.8 544.2 1394.4 545.0 1395.0 545.1 1395.6 545.2 1396.2 545.6 1396.8 544.5 1397.4 544.9 1398.1 544.2 1398.7 543.7 1399.3 544.0 1399.9 544.7 1400.5 544.1 1401.1 544.5 1401.7 545.1 1402.3 544.6 1402.9 544.6 1403.5 544.1 1404.1 544.5 1404.7 544.8 1405.3 544.6 1405.9 544.4 1406.5 544.8 1407.1 544.9 1407.7 544.5 1408.3 544.4 1409.0 544.6 1409.6 544.7 1410.2 544.8 1410.8 543.9 1411.4 544.6 1412.0 544.3 1412.6 544.2 1413.2 544.4 1413.8 544.5 1414.4 544.6 1415.0 544.6 1415.6 544.5 1416.2 544.5 1416.8 544.6 1417.4 544.5 1418.0 544.7 1418.6 544.1 1419.2 544.1 1419.9 543.7 1420.5 544.6 1421.1 544.8 1421.7 544.6 1422.3 545.2 1422.9 544.9 1423.5 544.8 1424.1 544.2 1424.7 544.5 1425.3 544.0 1425.9 544.0 1426.5 544.1 1427.1 544.6 1427.7 545.3 1428.3 544.8 1428.9 545.0 1429.5 544.8 1430.1 545.0 1430.8 544.8 1431.4 544.4 1432.0 544.1 1432.6 543.8 1433.2 544.2 1433.8 544.6 1434.4 545.0 1435.0 544.4 1435.6 545.6 1436.2 545.0 1436.8 544.7 1437.4 544.1 1438.0 544.0 1438.6 543.9 1439.2 544.3 1439.8 544.4 1440.4 544.6 1441.0 544.5 1441.6 545.2 1442.3 545.4 1442.9 544.8 1443.5 544.9 1444.1 544.5 1444.7 544.0 1445.3 543.6 1445.9 544.0 1446.5 544.3 1447.1 544.7 1447.7 544.9 1448.3 545.1 1448.9 545.1 1449.5 544.9 1450.1 544.8 1450.7 545.0 1451.3 544.5 1451.9 543.6 1452.5 543.8 1453.2 544.4 1453.8 544.3 1454.4 545.0 1455.0 544.6 1455.6 544.4 1456.2 544.7 1456.8 544.6 1457.4 544.6 1458.0 544.5 1458.6 544.3 1459.2 544.3 1459.8 544.2 1460.4 544.3 1461.0 544.5 1461.6 544.9 1462.2 544.7 1462.8 544.3 1463.4 544.3 1464.1 544.6 1464.7 544.7 1465.3 544.0 1465.9 542.6 1466.5 544.7 1467.1 546.9 1467.7 544.4 1468.3 543.3 1468.9 544.8 1469.5 544.3 1470.1 544.6 1470.7 544.6 1471.3 543.8 1471.9 544.2 1472.5 544.1 1473.1 544.4 1473.7 544.5 1474.3 544.8 1475.0 544.7 1475.6 544.9 1476.2 544.7 1476.8 544.3 1477.4 544.8 1478.0 544.4 1478.6 544.3 1479.2 544.4 1479.8 544.6 1480.4 544.7 1481.0 544.8 1481.6 544.8 1482.2 544.6 1482.8 544.7 1483.4 544.3 1484.0 544.9 1484.6 544.2 1485.2 544.8 1485.9 544.3 1486.5 544.2 1487.1 545.1 1487.7 544.7 1488.3 544.9 1488.9 544.7 1489.5 545.1 1490.1 544.6 1490.7 544.8 1491.3 544.1 1491.9 544.8 1492.5 544.3 1493.1 544.2 1493.7 544.6 1494.3 544.3 1494.9 545.2 1495.5 544.8 1496.1 545.1 1496.7 544.6 1497.4 544.4 1498.0 544.5 1498.6 544.3 1499.2 544.2 1499.8 545.0 1500.4 544.6 1501.0 544.7 1501.6 544.8 1502.2 544.6 1502.8 544.7 1503.4 544.7 1504.0 544.7 1504.6 544.3 1505.2 544.6 1505.8 544.5 1506.4 544.6 1507.0 544.2 1507.6 544.7 1508.3 545.3 1508.9 544.9 1509.5 544.9 1510.1 544.5 1510.7 544.3 1511.3 544.7 1511.9 544.7 1512.5 544.4 1513.1 544.8 1513.7 544.5 1514.3 544.6 1514.9 544.7 1515.5 544.4 1516.1 544.6 1516.7 544.4 1517.3 544.8 1517.9 544.1 1518.5 545.0 1519.2 544.2 1519.8 544.9 1520.4 544.5 1521.0 544.7 1521.6 544.5 1522.2 544.4 1522.8 544.6 1523.4 544.4 1524.0 544.4 1524.6 544.5 1525.2 544.3 1525.8 544.5 1526.4 544.6 1527.0 544.5 1527.6 544.6 1528.2 544.6 1528.8 544.4 1529.4 544.7 1530.1 544.1 1530.7 544.1 1531.3 545.1 1531.9 545.0 1532.5 544.7 1533.1 544.5 1533.7 544.3 1534.3 544.7 1534.9 544.2 1535.5 544.0 1536.1 544.7 1536.7 544.3 1537.3 544.7 1537.9 544.3 1538.5 544.4 1539.1 544.6 1539.7 544.5 1540.3 544.5 1541.0 544.6 1541.6 544.8 1542.2 544.7 1542.8 544.3 1543.4 544.2 1544.0 544.9 1544.6 544.8 1545.2 544.6 1545.8 544.0 1546.4 543.6 1547.0 544.3 1547.6 544.8 1548.2 544.8 1548.8 545.5 1549.4 545.2 1550.0 544.8 1550.6 544.3 1551.2 544.0 1551.8 544.0 1552.5 544.0 1553.1 544.3 1553.7 544.6 1554.3 544.8 1554.9 545.3 1555.5 544.9 1556.1 545.2 1556.7 544.8 1557.3 544.1 1557.9 543.8 1558.5 543.6 1559.1 544.0 1559.7 544.2 1560.3 544.6 1560.9 545.3 1561.5 545.3 1562.1 545.1 1562.7 545.2 1563.4 545.1 1564.0 544.4 1564.6 544.1 1565.2 544.4 1565.8 544.5 1566.4 544.6 1567.0 544.2 1567.6 544.9 1568.2 544.7 1568.8 544.2 1569.4 545.1 1570.0 544.5 1570.6 544.2 1571.2 544.4 1571.8 543.9 1572.4 544.4 1573.0 544.5 1573.6 544.3 1574.3 544.5 1574.9 544.7 1575.5 544.7 1576.1 544.7 1576.7 544.5 1577.3 544.8 1577.9 544.4 1578.5 544.3 1579.1 544.4 1579.7 544.3 1580.3 545.0 1580.9 544.5 1581.5 545.0 1582.1 544.7 1582.7 545.0 1583.3 544.5 1583.9 544.6 1584.5 544.5 1585.2 544.5 1585.8 544.1 1586.4 544.0 1587.0 544.4 1587.6 544.5 1588.2 544.3 1588.8 544.9 1589.4 544.8 1590.0 545.3 1590.6 544.5 1591.2 544.6 1591.8 543.7 1592.4 544.4 1593.0 544.1 1593.6 545.0 1594.2 544.5 1594.8 544.7 1595.4 544.3 1596.1 545.1 1596.7 544.2 1597.3 544.3 1597.9 544.2 1598.5 544.4 1599.1 544.7 1599.7 544.4 1600.3 544.3 1600.9 544.9 1601.5 545.1 1602.1 545.2 1602.7 545.1 1603.3 544.7 1603.9 544.1 1604.5 544.4 1605.1 543.9 1605.7 543.9 1606.3 544.5 1607.0 544.3 1607.6 544.4 1608.2 545.2 1608.8 545.5 1609.4 545.0 1610.0 544.7 1610.6 544.4 1611.2 544.2 1611.8 544.2 1612.4 543.9 1613.0 543.9 1613.6 544.5 1614.2 544.8 1614.8 545.5 1615.4 545.1 1616.0 545.2 1616.6 544.6 1617.2 544.2 1617.8 543.9 1618.5 544.3 1619.1 544.4 1619.7 544.2 1620.3 544.8 1620.9 545.4 1621.5 544.6 1622.1 544.9 1622.7 544.8 1623.3 544.8 1623.9 544.2 1624.5 544.8 1625.1 544.5 1625.7 544.4 1626.3 544.7 1626.9 544.7 1627.5 544.3 1628.1 544.8 1628.7 544.9 1629.4 545.3 1630.0 544.4 1630.6 544.7 1631.2 544.3 1631.8 544.7 1632.4 544.5 1633.0 544.7 1633.6 544.6 1634.2 544.3 1634.8 544.5 1635.4 545.1 1636.0 544.8 1636.6 544.9 1637.2 544.2 1637.8 544.4 1638.4 543.9 1639.0 544.1 1639.6 544.6 1640.3 544.4 1640.9 544.7 1641.5 545.0 1642.1 545.2 1642.7 544.7 1643.3 544.8 1643.9 544.1 1644.5 544.7 1645.1 544.2 1645.7 544.6 1646.3 544.5 1646.9 544.5 1647.5 544.9 1648.1 544.9 1648.7 544.8 1649.3 544.9 1649.9 545.1 1650.5 544.4 1651.2 544.2 1651.8 544.1 1652.4 543.6 1653.0 544.2 1653.6 544.6 1654.2 545.0 1654.8 545.1 1655.4 544.8 1656.0 544.3 1656.6 544.9 1657.2 544.9 1657.8 544.8 1658.4 544.1 1659.0 544.0 1659.6 544.5 1660.2 544.6 1660.8 544.4 1661.4 544.7 1662.1 545.0 1662.7 544.7 1663.3 544.5 1663.9 544.6 1664.5 544.0 1665.1 544.1 1665.7 544.5 1666.3 544.2 1666.9 544.8 1667.5 544.8 1668.1 545.0 1668.7 544.8 1669.3 544.9 1669.9 544.6 1670.5 544.7 1671.1 544.2 1671.7 544.0 1672.3 544.3 1673.0 544.5 1673.6 544.1 1674.2 544.8 1674.8 545.1 1675.4 545.4 1676.0 545.2 1676.6 544.4 1677.2 543.9 1677.8 544.1 1678.4 544.4 1679.0 544.0 1679.6 543.9 1680.2 544.2 1680.8 544.8 1681.4 545.2 1682.0 544.8 1682.6 544.6 1683.2 545.3 1683.8 544.4 1684.5 544.0 1685.1 543.8 1685.7 544.0 1686.3 543.5 1686.9 544.7 1687.5 544.6 1688.1 545.2 1688.7 545.6 1689.3 544.5 1689.9 545.0 1690.5 544.7 1691.1 544.2 1691.7 544.6 1692.3 544.3 1692.9 544.8 1693.5 544.1 1694.1 542.2 1694.7 544.5 1695.4 546.7 1696.0 544.6 1696.6 545.1 1697.2 543.4 1697.8 544.3 1698.4 544.7 1699.0 543.9 1699.6 544.5 1700.2 544.4 1700.8 544.0 1701.4 545.7 1702.0 544.6 1702.6 544.6 1703.2 544.6 1703.8 544.7 1704.4 544.1 1705.0 544.3 1705.6 544.4 1706.3 544.1 1706.9 544.6 1707.5 544.7 1708.1 544.5 1708.7 544.5 1709.3 544.7 1709.9 544.4 1710.5 544.8 1711.1 545.1 1711.7 544.2 1712.3 544.3 1712.9 544.3 1713.5 544.5 1714.1 544.9 1714.7 544.5 1715.3 545.0 1715.9 544.5 1716.5 544.6 1717.2 544.5 1717.8 544.0 1718.4 544.5 1719.0 544.5 1719.6 544.6 1720.2 544.7 1720.8 544.8 1721.4 544.7 1722.0 544.5 1722.6 544.6 1723.2 544.6 1723.8 544.3 1724.4 544.3 1725.0 544.0 1725.6 544.4 1726.2 544.6 1726.8 544.1 1727.4 544.5 1728.1 544.7 1728.7 544.5 1729.3 544.2 1729.9 544.5 1730.5 544.5 1731.1 544.4 1731.7 544.3 1732.3 544.3 1732.9 545.0 1733.5 544.6 1734.1 544.9 1734.7 544.3 1735.3 544.8 1735.9 545.0 1736.5 544.4 1737.1 544.4 1737.7 544.8 1738.3 544.1 1738.9 544.7 1739.6 544.0 1740.2 544.7 1740.8 544.5 1741.4 544.5 1742.0 544.6 1742.6 544.3 1743.2 544.4 1743.8 544.3 1744.4 544.4 1745.0 544.8" fill="none" stroke="#0000ff" stroke-opacity="0.62" stroke-width="1.15"/><rect x="1126.8" y="468.1" width="618.7" height="142.2" fill="none" stroke="#858585" stroke-width="2.1"/><text x="1093.6" y="473.9" textLength="28.9" lengthAdjust="spacingAndGlyphs">9000</text><text x="1093.6" y="508.9" textLength="28.9" lengthAdjust="spacingAndGlyphs">8500</text><text x="1093.6" y="543.9" textLength="28.9" lengthAdjust="spacingAndGlyphs">8000</text><text x="1093.6" y="578.9" textLength="28.9" lengthAdjust="spacingAndGlyphs">7500</text><text x="1093.6" y="613.9" textLength="28.9" lengthAdjust="spacingAndGlyphs">7000</text><text x="1124.7" y="624.9" textLength="7.2" lengthAdjust="spacingAndGlyphs">0</text><text x="1178.1" y="624.9" textLength="21.5" lengthAdjust="spacingAndGlyphs">100</text><text x="1238.7" y="624.9" textLength="21.5" lengthAdjust="spacingAndGlyphs">200</text><text x="1299.2" y="624.9" textLength="21.5" lengthAdjust="spacingAndGlyphs">300</text><text x="1359.8" y="624.9" textLength="21.5" lengthAdjust="spacingAndGlyphs">400</text><text x="1420.3" y="624.9" textLength="21.5" lengthAdjust="spacingAndGlyphs">500</text><text x="1480.9" y="624.9" textLength="21.5" lengthAdjust="spacingAndGlyphs">600</text><text x="1541.4" y="624.9" textLength="21.5" lengthAdjust="spacingAndGlyphs">700</text><text x="1602.0" y="624.9" textLength="21.5" lengthAdjust="spacingAndGlyphs">800</text><text x="1662.5" y="624.9" textLength="21.5" lengthAdjust="spacingAndGlyphs">900</text><text x="1719.5" y="624.9" textLength="28.6" lengthAdjust="spacingAndGlyphs">1000</text><rect x="1639.4" y="478.7" width="15" height="11" fill="#fff" stroke="#cfcfcf" stroke-width="1"/><rect x="1640.9" y="480.2" width="12" height="8" fill="#0000ff"/><text x="1658.3" y="488.1" fill="#858585" textLength="79.1" lengthAdjust="spacingAndGlyphs">aida01 3.8.W</text><path d="M1744.4 457.9L1755.4 468.9L1744.4 479.9L1733.4 468.9Z" fill="#ff0000"/></svg>
<svg width="1920" height="1080" font-family="Liberation Serif" font-size="11.8" fill="#666"><path d="M182.2 685.4H799.2" stroke="#e6e6e6" stroke-width="1.1"/><path d="M182.2 721.0H799.2" stroke="#e6e6e6" stroke-width="1.1"/><path d="M182.2 756.5H799.2" stroke="#e6e6e6" stroke-width="1.1"/><path d="M242.8 649.9V792.1" stroke="#e6e6e6" stroke-width="1.1"/><path d="M303.3 649.9V792.1" stroke="#e6e6e6" stroke-width="1.1"/><path d="M363.9 649.9V792.1" stroke="#e6e6e6" stroke-width="1.1"/><path d="M424.4 649.9V792.1" stroke="#e6e6e6" stroke-width="1.1"/><path d="M484.9 649.9V792.1" stroke="#e6e6e6" stroke-width="1.1"/><path d="M545.5 649.9V792.1" stroke="#e6e6e6" stroke-width="1.1"/><path d="M606.0 649.9V792.1" stroke="#e6e6e6" stroke-width="1.1"/><path d="M666.6 649.9V792.1" stroke="#e6e6e6" stroke-width="1.1"/><path d="M727.2 649.9V792.1" stroke="#e6e6e6" stroke-width="1.1"/><path d="M787.7 649.9V792.1" stroke="#e6e6e6" stroke-width="1.1"/><path d="M182.2 737.9 182.8 738.3 183.4 738.2 184.0 737.9 184.6 738.2 185.2 738.0 185.8 738.3 186.4 738.3 187.0 738.3 187.6 738.4 188.3 738.4 188.9 738.1 189.5 738.3 190.1 738.0 190.7 737.6 191.3 738.2 191.9 738.1 192.5 737.9 193.1 738.1 193.7 738.2 194.3 738.0 194.9 737.7 195.5 738.3 196.1 738.1 196.7 738.5 197.3 738.2 197.9 738.1 198.5 738.4 199.2 737.9 199.8 738.2 200.4 738.2 201.0 738.0 201.6 737.7 202.2 738.4 202.8 738.3 203.4 737.7 204.0 738.3 204.6 738.5 205.2 738.0 205.8 738.3 206.4 737.8 207.0 738.1 207.6 738.1 208.2 738.0 208.8 737.9 209.4 738.1 210.1 737.7 210.7 738.1 211.3 738.1 211.9 737.9 212.5 737.9 213.1 738.3 213.7 737.9 214.3 737.8 214.9 738.1 215.5 737.4 216.1 738.3 216.7 738.0 217.3 738.2 217.9 738.3 218.5 738.2 219.1 738.1 219.7 738.1 220.3 737.6 221.0 738.2 221.6 738.1 222.2 737.9 222.8 738.0 223.4 737.9 224.0 737.8 224.6 738.1 225.2 738.0 225.8 738.4 226.4 738.2 227.0 738.1 227.6 738.2 228.2 737.8 228.8 738.2 229.4 737.9 230.0 738.1 230.6 738.1 231.2 738.2 231.9 738.0 232.5 738.1 233.1 737.9 233.7 738.0 234.3 738.2 234.9 738.6 235.5 738.1 236.1 738.0 236.7 738.2 237.3 738.3 237.9 738.4 238.5 738.8 239.1 738.5 239.7 738.0 240.3 737.3 240.9 738.1 241.5 737.7 242.1 738.4 242.8 737.9 243.4 737.8 244.0 738.6 244.6 738.1 245.2 738.2 245.8 738.0 246.4 738.3 247.0 737.7 247.6 737.8 248.2 737.7 248.8 737.6 249.4 737.9 250.0 738.0 250.6 737.9 251.2 738.3 251.8 739.0 252.4 738.4 253.0 738.2 253.6 737.8 254.3 738.1 254.9 737.6 255.5 737.7 256.1 738.3 256.7 738.1 257.3 738.1 257.9 738.2 258.5 738.2 259.1 738.4 259.7 738.1 260.3 737.9 260.9 737.7 261.5 738.0 262.1 738.1 262.7 738.0 263.3 737.6 263.9 738.3 264.5 738.5 265.2 738.2 265.8 738.2 266.4 738.4 267.0 737.7 267.6 737.9 268.2 737.6 268.8 738.0 269.4 738.1 270.0 737.9 270.6 737.9 271.2 738.3 271.8 738.5 272.4 738.1 273.0 737.0 273.6 737.7 274.2 737.7 274.8 737.9 275.4 737.7 276.1 737.5 276.7 737.7 277.3 738.7 277.9 738.6 278.5 737.8 279.1 737.8 279.7 738.1 280.3 737.8 280.9 738.0 281.5 737.4 282.1 737.7 282.7 738.3 283.3 738.1 283.9 738.9 284.5 738.5 285.1 738.2 285.7 738.1 286.3 738.1 287.0 737.8 287.6 738.1 288.2 737.7 288.8 738.2 289.4 738.1 290.0 738.2 290.6 737.7 291.2 738.3 291.8 738.2 292.4 738.1 293.0 738.4 293.6 738.3 294.2 737.9 294.8 737.7 295.4 737.9 296.0 737.8 296.6 738.5 297.2 738.3 297.9 738.2 298.5 738.1 299.1 738.0 299.7 738.0 300.3 738.0 300.9 737.9 301.5 738.3 302.1 738.1 302.7 732.8 303.3 733.8 303.9 737.9 304.5 738.2 305.1 737.8 305.7 737.9 306.3 737.7 306.9 738.3 307.5 738.2 308.1 738.3 308.7 738.5 309.4 737.7 310.0 738.0 310.6 738.3 311.2 738.2 311.8 738.4 312.4 738.1 313.0 738.0 313.6 738.3 314.2 738.2 314.8 737.5 315.4 737.9 316.0 738.2 316.6 738.2 317.2 738.7 317.8 738.2 318.4 738.4 319.0 738.0 319.6 738.1 320.3 738.1 320.9 738.3 321.5 738.1 322.1 737.8 322.7 737.3 323.3 737.9 323.9 738.2 324.5 738.8 325.1 738.0 325.7 738.4 326.3 738.5 326.9 738.3 327.5 737.9 328.1 737.8 328.7 737.9 329.3 738.1 329.9 737.9 330.5 738.3 331.2 738.3 331.8 738.0 332.4 738.7 333.0 738.2 333.6 737.7 334.2 737.9 334.8 737.7 335.4 738.5 336.0 738.3 336.6 738.2 337.2 738.3 337.8 738.2 338.4 738.3 339.0 738.0 339.6 738.3 340.2 737.9 340.8 737.6 341.4 737.8 342.1 738.3 342.7 738.1 343.3 738.2 343.9 737.9 344.5 738.1 345.1 738.0 345.7 737.9 346.3 737.9 346.9 738.1 347.5 738.5 348.1 737.8 348.7 737.9 349.3 737.9 349.9 737.7 350.5 737.8 351.1 737.7 351.7 738.1 352.3 738.2 353.0 738.6 353.6 738.2 354.2 738.3 354.8 738.1 355.4 738.3 356.0 738.2 356.6 738.0 357.2 738.0 357.8 738.1 358.4 738.0 359.0 738.5 359.6 738.2 360.2 738.5 360.8 738.5 361.4 738.1 362.0 738.0 362.6 737.8 363.2 738.3 363.9 737.0 364.5 738.4 365.1 737.8 365.7 738.3 366.3 738.0 366.9 738.1 367.5 738.2 368.1 737.9 368.7 737.8 369.3 737.8 369.9 737.6 370.5 737.8 371.1 738.2 371.7 738.0 372.3 738.2 372.9 737.3 373.5 737.9 374.1 738.0 374.7 738.0 375.4 738.1 376.0 738.4 376.6 738.2 377.2 737.8 377.8 738.5 378.4 738.2 379.0 738.3 379.6 737.7 380.2 738.0 380.8 737.6 381.4 738.2 382.0 737.6 382.6 737.6 383.2 738.2 383.8 738.2 384.4 738.2 385.0 737.7 385.6 738.5 386.3 737.9 386.9 738.3 387.5 737.9 388.1 738.3 388.7 737.6 389.3 738.4 389.9 738.2 390.5 737.8 391.1 737.9 391.7 738.5 392.3 737.5 392.9 738.0 393.5 738.7 394.1 738.3 394.7 738.2 395.3 737.8 395.9 737.9 396.5 738.0 397.2 737.7 397.8 737.8 398.4 738.0 399.0 738.3 399.6 737.9 400.2 738.0 400.8 737.5 401.4 737.7 402.0 737.9 402.6 737.4 403.2 738.2 403.8 738.2 404.4 738.4 405.0 738.7 405.6 738.2 406.2 738.2 406.8 737.8 407.4 737.4 408.1 737.4 408.7 737.6 409.3 737.6 409.9 738.0 410.5 738.4 411.1 738.8 411.7 738.3 412.3 738.1 412.9 738.3 413.5 737.8 414.1 737.7 414.7 737.8 415.3 737.7 415.9 737.7 416.5 738.2 417.1 738.3 417.7 738.9 418.3 738.5 419.0 738.9 419.6 738.2 420.2 737.5 420.8 738.2 421.4 737.8 422.0 738.2 422.6 738.2 423.2 737.9 423.8 738.3 424.4 738.8 425.0 738.8 425.6 738.5 426.2 738.1 426.8 737.7 427.4 737.8 428.0 737.9 428.6 737.8 429.2 737.5 429.8 738.6 430.5 737.9 431.1 738.7 431.7 738.6 432.3 738.0 432.9 738.2 433.5 738.0 434.1 737.6 434.7 737.7 435.3 737.4 435.9 737.8 436.5 738.2 437.1 738.1 437.7 738.2 438.3 737.9 438.9 737.6 439.5 738.0 440.1 737.9 440.7 737.7 441.4 737.8 442.0 737.9 442.6 737.8 443.2 737.8 443.8 738.1 444.4 738.3 445.0 738.4 445.6 738.1 446.2 738.0 446.8 737.8 447.4 737.4 448.0 737.5 448.6 737.8 449.2 737.9 449.8 738.2 450.4 738.2 451.0 738.1 451.6 738.0 452.3 738.3 452.9 738.1 453.5 738.2 454.1 738.4 454.7 738.0 455.3 737.9 455.9 738.6 456.5 737.6 457.1 738.6 457.7 738.7 458.3 738.0 458.9 738.1 459.5 738.1 460.1 738.0 460.7 738.0 461.3 737.6 461.9 737.9 462.5 738.3 463.2 738.2 463.8 738.2 464.4 738.3 465.0 738.0 465.6 737.9 466.2 737.9 466.8 738.1 467.4 738.0 468.0 738.0 468.6 737.9 469.2 738.3 469.8 738.0 470.4 738.1 471.0 738.1 471.6 738.1 472.2 738.1 472.8 738.4 473.4 737.8 474.1 738.5 474.7 737.9 475.3 737.9 475.9 737.9 476.5 738.2 477.1 738.1 477.7 738.2 478.3 738.1 478.9 738.0 479.5 738.4 480.1 738.0 480.7 737.8 481.3 738.2 481.9 737.9 482.5 737.9 483.1 737.7 483.7 738.1 484.3 738.3 484.9 737.9 485.6 738.2 486.2 737.6 486.8 738.0 487.4 738.1 488.0 738.1 488.6 737.9 489.2 738.4 489.8 738.1 490.4 737.7 491.0 738.2 491.6 738.4 492.2 738.0 492.8 737.9 493.4 738.1 494.0 738.1 494.6 738.0 495.2 738.1 495.8 738.4 496.5 738.4 497.1 738.7 497.7 738.2 498.3 738.4 498.9 737.8 499.5 737.9 500.1 737.7 500.7 737.8 501.3 738.0 501.9 737.8 502.5 738.0 503.1 738.0 503.7 738.2 504.3 738.0 504.9 738.0 505.5 737.4 506.1 738.2 506.7 738.3 507.4 738.2 508.0 738.2 508.6 737.7 509.2 737.5 509.8 738.4 510.4 738.3 511.0 738.7 511.6 738.1 512.2 738.2 512.8 738.1 513.4 737.7 514.0 737.7 514.6 738.0 515.2 737.5 515.8 737.7 516.4 738.1 517.0 738.1 517.6 738.1 518.3 738.5 518.9 738.1 519.5 738.3 520.1 737.9 520.7 737.9 521.3 738.0 521.9 738.0 522.5 738.4 523.1 738.3 523.7 738.0 524.3 738.4 524.9 738.6 525.5 738.1 526.1 738.5 526.7 738.0 527.3 738.0 527.9 738.2 528.5 737.8 529.2 737.9 529.8 738.2 530.4 738.3 531.0 738.4 531.6 738.4 532.2 738.4 532.8 738.2 533.4 737.8 534.0 737.7 534.6 737.6 535.2 738.2 535.8 738.0 536.4 738.3 537.0 737.7 537.6 738.4 538.2 738.0 538.8 738.2 539.4 738.0 540.1 738.0 540.7 737.8 541.3 737.9 541.9 737.6 542.5 738.1 543.1 738.4 543.7 738.6 544.3 738.2 544.9 738.5 545.5 738.0 546.1 737.9 546.7 738.0 547.3 737.6 547.9 737.8 548.5 737.9 549.1 738.2 549.7 738.2 550.3 738.6 550.9 738.2 551.6 738.4 552.2 738.6 552.8 738.0 553.4 737.6 554.0 737.6 554.6 737.7 555.2 738.1 555.8 737.9 556.4 737.6 557.0 738.7 557.6 738.8 558.2 738.2 558.8 738.4 559.4 738.4 560.0 738.1 560.6 737.8 561.2 738.3 561.8 738.2 562.5 738.2 563.1 738.1 563.7 738.2 564.3 737.6 564.9 738.0 565.5 737.7 566.1 738.2 566.7 737.8 567.3 737.7 567.9 737.9 568.5 738.4 569.1 738.0 569.7 738.2 570.3 737.9 570.9 738.2 571.5 737.9 572.1 737.9 572.7 737.8 573.4 737.9 574.0 738.3 574.6 738.0 575.2 737.9 575.8 738.0 576.4 737.9 577.0 737.6 577.6 737.9 578.2 738.4 578.8 738.2 579.4 737.9 580.0 737.9 580.6 738.0 581.2 737.9 581.8 738.6 582.4 737.9 583.0 738.1 583.6 738.2 584.3 738.3 584.9 738.4 585.5 738.1 586.1 738.0 586.7 738.1 587.3 737.6 587.9 738.0 588.5 738.3 589.1 737.9 589.7 738.5 590.3 738.2 590.9 738.6 591.5 738.0 592.1 737.8 592.7 738.4 593.3 738.1 593.9 738.3 594.5 737.7 595.2 737.5 595.8 737.8 596.4 738.4 597.0 738.0 597.6 737.8 598.2 737.8 598.8 738.3 599.4 738.6 600.0 737.8 600.6 737.8 601.2 737.8 601.8 737.7 602.4 737.6 603.0 738.3 603.6 737.9 604.2 738.2 604.8 738.9 605.4 738.4 606.0 738.3 606.7 738.5 607.3 737.9 607.9 738.0 608.5 737.7 609.1 737.7 609.7 738.1 610.3 738.5 610.9 738.1 611.5 738.3 612.1 738.4 612.7 738.0 613.3 737.9 613.9 737.8 614.5 737.5 615.1 737.8 615.7 738.0 616.3 738.2 616.9 738.3 617.6 738.3 618.2 738.1 618.8 738.2 619.4 737.9 620.0 738.0 620.6 738.5 621.2 737.6 621.8 738.0 622.4 737.9 623.0 738.3 623.6 738.2 624.2 738.1 624.8 738.4 625.4 738.3 626.0 738.1 626.6 738.4 627.2 738.0 627.8 738.0 628.5 738.1 629.1 738.0 629.7 737.8 630.3 738.2 630.9 738.6 631.5 738.3 632.1 738.0 632.7 737.9 633.3 738.1 633.9 737.8 634.5 737.9 635.1 738.3 635.7 738.3 636.3 738.0 636.9 738.6 637.5 738.5 638.1 738.6 638.7 738.0 639.4 738.1 640.0 737.6 640.6 737.6 641.2 737.3 641.8 737.7 642.4 737.8 643.0 737.8 643.6 738.3 644.2 738.5 644.8 738.4 645.4 738.7 646.0 738.2 646.6 738.0 647.2 738.3 647.8 737.9 648.4 737.9 649.0 737.5 649.6 738.2 650.3 738.3 650.9 738.4 651.5 738.6 652.1 738.4 652.7 738.1 653.3 737.9 653.9 737.8 654.5 737.9 655.1 738.3 655.7 738.4 656.3 738.0 656.9 738.2 657.5 738.5 658.1 737.6 658.7 737.6 659.3 737.9 659.9 738.0 660.5 738.1 661.2 738.3 661.8 737.9 662.4 738.0 663.0 738.1 663.6 737.8 664.2 738.0 664.8 738.3 665.4 738.3 666.0 738.2 666.6 738.1 667.2 737.7 667.8 738.0 668.4 737.6 669.0 738.0 669.6 737.8 670.2 738.2 670.8 738.3 671.4 738.0 672.0 737.9 672.7 738.2 673.3 737.8 673.9 738.4 674.5 737.7 675.1 737.8 675.7 737.3 676.3 738.2 676.9 737.9 677.5 738.3 678.1 738.2 678.7 737.9 679.3 738.0 679.9 738.1 680.5 738.2 681.1 738.2 681.7 737.9 682.3 737.9 682.9 738.2 683.6 738.6 684.2 738.3 684.8 738.2 685.4 738.4 686.0 738.2 686.6 737.9 687.2 738.1 687.8 737.7 688.4 737.7 689.0 738.5 689.6 738.1 690.2 738.3 690.8 738.6 691.4 738.4 692.0 737.9 692.6 737.8 693.2 738.5 693.8 737.8 694.5 737.9 695.1 737.7 695.7 738.1 696.3 737.9 696.9 738.3 697.5 738.3 698.1 738.2 698.7 738.3 699.3 738.2 699.9 737.7 700.5 737.9 701.1 737.8 701.7 737.9 702.3 738.0 702.9 738.0 703.5 738.3 704.1 738.5 704.7 738.4 705.4 738.3 706.0 738.0 706.6 737.9 707.2 737.7 707.8 737.5 708.4 737.6 709.0 738.1 709.6 737.9 710.2 738.1 710.8 738.2 711.4 738.2 712.0 737.6 712.6 738.5 713.2 738.3 713.8 738.2 714.4 737.5 715.0 737.9 715.6 738.2 716.3 738.3 716.9 738.4 717.5 738.1 718.1 738.1 718.7 738.2 719.3 738.3 719.9 737.8 720.5 738.5 721.1 737.8 721.7 737.9 722.3 738.0 722.9 738.4 723.5 738.0 724.1 738.4 724.7 737.8 725.3 738.1 725.9 738.1 726.5 738.1 727.2 738.4 727.8 737.9 728.4 738.1 729.0 738.0 729.6 738.4 730.2 738.3 730.8 738.1 731.4 738.1 732.0 738.0 732.6 737.6 733.2 738.5 733.8 738.4 734.4 738.0 735.0 738.1 735.6 738.0 736.2 738.2 736.8 738.1 737.4 738.4 738.0 738.2 738.7 738.0 739.3 737.7 739.9 738.0 740.5 738.1 741.1 738.2 741.7 737.6 742.3 738.0 742.9 737.8 743.5 738.4 744.1 738.3 744.7 737.8 745.3 737.8 745.9 737.8 746.5 738.2 747.1 738.4 747.7 737.9 748.3 737.8 748.9 737.8 749.6 738.3 750.2 738.2 750.8 737.8 751.4 738.0 752.0 737.8 752.6 738.1 753.2 738.1 753.8 738.0 754.4 738.3 755.0 738.2 755.6 738.0 756.2 738.1 756.8 738.5 757.4 738.0 758.0 737.9 758.6 737.7 759.2 737.9 759.8 738.3 760.5 737.8 761.1 738.0 761.7 738.2 762.3 737.9 762.9 738.1 763.5 738.4 764.1 738.1 764.7 738.2 765.3 738.3 765.9 738.0 766.5 738.2 767.1 737.8 767.7 738.0 768.3 737.9 768.9 737.8 769.5 738.4 770.1 738.4 770.7 738.1 771.4 737.8 772.0 737.9 772.6 738.0 773.2 737.9 773.8 737.6 774.4 737.6 775.0 738.1 775.6 738.3 776.2 738.1 776.8 738.3 777.4 737.9 778.0 738.2 778.6 737.9 779.2 738.0 779.8 738.0 780.4 737.8 781.0 737.8 781.6 737.7 782.3 738.0 782.9 738.1 783.5 738.5 784.1 737.8 784.7 738.7 785.3 738.5 785.9 737.9 786.5 738.0 787.1 738.4 787.7 738.4 788.3 737.9 788.9 737.8 789.5 738.0 790.1 738.6 790.7 738.3 791.3 737.9 791.9 738.2 792.5 738.1 793.1 738.6 793.8 737.7 794.4 738.0 795.0 737.7 795.6 737.7 796.2 737.6 796.8 738.3 797.4 738.4 798.0 738.2 798.6 738.0 799.2 738.1" fill="none" stroke="#0000ff" stroke-opacity="0.62" stroke-width="1.15"/><rect x="181.0" y="649.9" width="618.7" height="142.2" fill="none" stroke="#858585" stroke-width="2.1"/><text x="147.8" y="655.7" textLength="28.9" lengthAdjust="spacingAndGlyphs">9000</text><text x="147.8" y="690.7" textLength="28.9" lengthAdjust="spacingAndGlyphs">8500</text><text x="147.8" y="725.7" textLength="28.9" lengthAdjust="spacingAndGlyphs">8000</text><text x="147.8" y="760.7" textLength="28.9" lengthAdjust="spacingAndGlyphs">7500</text><text x="147.8" y="795.7" textLength="28.9" lengthAdjust="spacingAndGlyphs">7000</text><text x="178.9" y="806.7" textLength="7.2" lengthAdjust="spacingAndGlyphs">0</text><text x="232.3" y="806.7" textLength="21.5" lengthAdjust="spacingAndGlyphs">100</text><text x="292.9" y="806.7" textLength="21.5" lengthAdjust="spacingAndGlyphs">200</text><text x="353.4" y="806.7" textLength="21.5" lengthAdjust="spacingAndGlyphs">300</text><text x="414.0" y="806.7" textLength="21.5" lengthAdjust="spacingAndGlyphs">400</text><text x="474.5" y="806.7" textLength="21.5" lengthAdjust="spacingAndGlyphs">500</text><text x="535.1" y="806.7" textLength="21.5" lengthAdjust="spacingAndGlyphs">600</text><text x="595.6" y="806.7" textLength="21.5" lengthAdjust="spacingAndGlyphs">700</text><text x="656.2" y="806.7" textLength="21.5" lengthAdjust="spacingAndGlyphs">800</text><text x="716.7" y="806.7" textLength="21.5" lengthAdjust="spacingAndGlyphs">900</text><text x="773.7" y="806.7" textLength="28.6" lengthAdjust="spacingAndGlyphs">1000</text><rect x="693.6" y="660.5" width="15" height="11" fill="#fff" stroke="#cfcfcf" stroke-width="1"/><rect x="695.1" y="662.0" width="12" height="8" fill="#0000ff"/><text x="712.5" y="669.9" fill="#858585" textLength="79.1" lengthAdjust="spacingAndGlyphs">aida06 3.8.W</text><path d="M798.6 639.7L809.6 650.7L798.6 661.7L787.6 650.7Z" fill="#ff0000"/></svg>
<svg width="1920" height="1080" font-family="Liberation Serif" font-size="11.8" fill="#666"><path d="M1128.0 685.4H1745.0" stroke="#e6e6e6" stroke-width="1.1"/><path d="M1128.0 721.0H1745.0" stroke="#e6e6e6" stroke-width="1.1"/><path d="M1128.0 756.5H1745.0" stroke="#e6e6e6" stroke-width="1.1"/><path d="M1188.5 649.9V792.1" stroke="#e6e6e6" stroke-width="1.1"/><path d="M1249.1 649.9V792.1" stroke="#e6e6e6" stroke-width="1.1"/><path d="M1309.7 649.9V792.1" stroke="#e6e6e6" stroke-width="1.1"/><path d="M1370.2 649.9V792.1" stroke="#e6e6e6" stroke-width="1.1"/><path d="M1430.8 649.9V792.1" stroke="#e6e6e6" stroke-width="1.1"/><path d="M1491.3 649.9V792.1" stroke="#e6e6e6" stroke-width="1.1"/><path d="M1551.8 649.9V792.1" stroke="#e6e6e6" stroke-width="1.1"/><path d="M1612.4 649.9V792.1" stroke="#e6e6e6" stroke-width="1.1"/><path d="M1673.0 649.9V792.1" stroke="#e6e6e6" stroke-width="1.1"/><path d="M1733.5 649.9V792.1" stroke="#e6e6e6" stroke-width="1.1"/><path d="M1128.0 733.7 1128.6 733.7 1129.2 734.1 1129.8 733.4 1130.4 734.0 1131.0 733.6 1131.6 733.3 1132.2 734.0 1132.8 734.0 1133.4 733.6 1134.1 734.2 1134.7 733.8 1135.3 733.7 1135.9 733.7 1136.5 734.0 1137.1 734.0 1137.7 733.5 1138.3 733.7 1138.9 733.6 1139.5 733.5 1140.1 733.7 1140.7 733.6 1141.3 733.8 1141.9 734.0 1142.5 733.7 1143.1 733.6 1143.7 734.1 1144.3 733.8 1145.0 734.2 1145.6 733.8 1146.2 733.7 1146.8 733.4 1147.4 733.5 1148.0 734.4 1148.6 734.2 1149.2 734.0 1149.8 733.9 1150.4 734.1 1151.0 733.8 1151.6 733.9 1152.2 733.8 1152.8 733.7 1153.4 733.6 1154.0 733.1 1154.6 733.5 1155.2 734.1 1155.9 733.7 1156.5 734.2 1157.1 734.2 1157.7 734.0 1158.3 733.8 1158.9 733.9 1159.5 733.7 1160.1 733.5 1160.7 733.6 1161.3 733.8 1161.9 734.4 1162.5 734.1 1163.1 733.8 1163.7 733.9 1164.3 733.7 1164.9 733.7 1165.5 733.2 1166.1 733.4 1166.8 733.7 1167.4 733.8 1168.0 733.6 1168.6 734.2 1169.2 733.8 1169.8 734.0 1170.4 733.8 1171.0 733.8 1171.6 733.5 1172.2 733.4 1172.8 733.6 1173.4 733.3 1174.0 733.7 1174.6 733.4 1175.2 733.9 1175.8 733.9 1176.4 733.9 1177.0 734.0 1177.7 734.1 1178.3 733.7 1178.9 733.6 1179.5 733.5 1180.1 733.2 1180.7 733.8 1181.3 733.9 1181.9 734.0 1182.5 733.5 1183.1 733.9 1183.7 733.9 1184.3 733.8 1184.9 734.3 1185.5 733.7 1186.1 734.0 1186.7 733.5 1187.3 733.7 1187.9 733.1 1188.5 733.8 1189.2 733.8 1189.8 734.2 1190.4 733.6 1191.0 733.6 1191.6 733.5 1192.2 734.1 1192.8 734.1 1193.4 734.2 1194.0 734.0 1194.6 733.8 1195.2 734.1 1195.8 733.5 1196.4 733.7 1197.0 734.1 1197.6 733.9 1198.2 733.8 1198.8 733.8 1199.4 734.0 1200.1 734.2 1200.7 733.4 1201.3 733.2 1201.9 733.7 1202.5 733.9 1203.1 734.4 1203.7 734.2 1204.3 733.9 1204.9 734.0 1205.5 733.7 1206.1 733.5 1206.7 732.9 1207.3 733.4 1207.9 733.3 1208.5 734.1 1209.1 733.9 1209.7 734.5 1210.3 734.2 1211.0 734.2 1211.6 733.4 1212.2 733.2 1212.8 733.6 1213.4 733.3 1214.0 733.5 1214.6 733.6 1215.2 733.8 1215.8 734.3 1216.4 734.0 1217.0 734.2 1217.6 734.1 1218.2 733.6 1218.8 733.9 1219.4 733.3 1220.0 733.5 1220.6 734.0 1221.2 733.6 1221.9 733.6 1222.5 733.7 1223.1 733.5 1223.7 734.1 1224.3 734.0 1224.9 733.9 1225.5 734.0 1226.1 733.8 1226.7 733.6 1227.3 733.7 1227.9 733.8 1228.5 733.6 1229.1 733.9 1229.7 733.8 1230.3 734.0 1230.9 733.9 1231.5 733.8 1232.1 733.3 1232.8 733.9 1233.4 733.8 1234.0 733.5 1234.6 733.4 1235.2 733.6 1235.8 733.9 1236.4 733.9 1237.0 733.8 1237.6 733.5 1238.2 733.3 1238.8 734.2 1239.4 734.0 1240.0 733.4 1240.6 734.5 1241.2 733.8 1241.8 733.8 1242.4 733.5 1243.0 734.2 1243.7 733.7 1244.3 733.7 1244.9 734.1 1245.5 733.7 1246.1 733.5 1246.7 734.3 1247.3 733.9 1247.9 733.8 1248.5 733.5 1249.1 734.3 1249.7 733.9 1250.3 733.9 1250.9 734.1 1251.5 733.3 1252.1 734.1 1252.7 733.6 1253.3 733.7 1253.9 733.2 1254.5 733.8 1255.2 733.5 1255.8 733.7 1256.4 733.9 1257.0 734.0 1257.6 733.8 1258.2 733.6 1258.8 733.8 1259.4 733.4 1260.0 733.6 1260.6 733.6 1261.2 733.6 1261.8 733.6 1262.4 734.3 1263.0 734.2 1263.6 733.9 1264.2 734.0 1264.8 734.0 1265.4 734.0 1266.1 733.3 1266.7 733.5 1267.3 733.9 1267.9 733.8 1268.5 734.0 1269.1 734.1 1269.7 733.4 1270.3 734.0 1270.9 733.9 1271.5 733.9 1272.1 734.0 1272.7 733.6 1273.3 733.7 1273.9 733.1 1274.5 733.9 1275.1 733.7 1275.7 734.2 1276.3 734.4 1277.0 734.2 1277.6 733.7 1278.2 734.0 1278.8 733.7 1279.4 733.9 1280.0 733.3 1280.6 733.6 1281.2 733.5 1281.8 733.8 1282.4 734.3 1283.0 734.3 1283.6 734.0 1284.2 734.3 1284.8 733.8 1285.4 733.7 1286.0 732.9 1286.6 733.2 1287.2 733.5 1287.9 733.3 1288.5 734.0 1289.1 734.0 1289.7 734.2 1290.3 734.1 1290.9 734.4 1291.5 733.9 1292.1 733.6 1292.7 733.6 1293.3 733.2 1293.9 733.6 1294.5 733.5 1295.1 734.0 1295.7 733.8 1296.3 734.0 1296.9 734.1 1297.5 734.2 1298.1 733.4 1298.8 733.4 1299.4 733.4 1300.0 733.4 1300.6 733.4 1301.2 733.9 1301.8 734.5 1302.4 734.5 1303.0 734.2 1303.6 734.0 1304.2 734.6 1304.8 734.0 1305.4 733.7 1306.0 733.2 1306.6 733.8 1307.2 733.5 1307.8 733.5 1308.4 734.3 1309.0 734.2 1309.7 733.9 1310.3 733.9 1310.9 733.8 1311.5 733.8 1312.1 733.8 1312.7 733.9 1313.3 733.3 1313.9 733.7 1314.5 734.2 1315.1 734.3 1315.7 733.7 1316.3 733.9 1316.9 733.9 1317.5 733.8 1318.1 734.0 1318.7 733.5 1319.3 734.0 1319.9 733.7 1320.5 733.8 1321.2 734.1 1321.8 734.5 1322.4 733.7 1323.0 733.7 1323.6 734.0 1324.2 733.5 1324.8 733.9 1325.4 734.0 1326.0 733.6 1326.6 733.5 1327.2 734.0 1327.8 733.9 1328.4 734.3 1329.0 733.5 1329.6 734.2 1330.2 734.4 1330.8 733.7 1331.4 733.7 1332.1 733.7 1332.7 733.7 1333.3 733.9 1333.9 733.7 1334.5 733.9 1335.1 734.2 1335.7 733.8 1336.3 733.5 1336.9 733.6 1337.5 734.0 1338.1 733.9 1338.7 733.8 1339.3 733.4 1339.9 733.6 1340.5 733.9 1341.1 733.7 1341.7 733.7 1342.3 733.7 1343.0 733.7 1343.6 733.6 1344.2 733.6 1344.8 733.8 1345.4 733.5 1346.0 733.5 1346.6 733.8 1347.2 733.3 1347.8 733.6 1348.4 733.5 1349.0 733.7 1349.6 733.6 1350.2 733.9 1350.8 733.8 1351.4 733.6 1352.0 733.6 1352.6 733.3 1353.2 733.7 1353.9 733.7 1354.5 733.8 1355.1 734.2 1355.7 734.2 1356.3 734.3 1356.9 734.0 1357.5 734.2 1358.1 733.9 1358.7 734.0 1359.3 733.6 1359.9 733.4 1360.5 733.6 1361.1 733.6 1361.7 734.0 1362.3 734.2 1362.9 734.1 1363.5 734.0 1364.1 734.0 1364.8 733.6 1365.4 733.3 1366.0 733.2 1366.6 733.1 1367.2 733.3 1367.8 733.7 1368.4 733.5 1369.0 733.9 1369.6 733.9 1370.2 733.8 1370.8 733.9 1371.4 733.8 1372.0 733.9 1372.6 733.3 1373.2 733.3 1373.8 733.6 1374.4 733.4 1375.0 733.9 1375.6 734.1 1376.3 734.2 1376.9 733.8 1377.5 734.0 1378.1 733.8 1378.7 734.2 1379.3 733.2 1379.9 732.9 1380.5 733.8 1381.1 733.5 1381.7 734.1 1382.3 733.8 1382.9 733.8 1383.5 733.6 1384.1 733.7 1384.7 733.8 1385.3 733.6 1385.9 734.2 1386.5 733.5 1387.2 733.9 1387.8 734.0 1388.4 733.3 1389.0 733.7 1389.6 733.8 1390.2 733.4 1390.8 733.9 1391.4 733.8 1392.0 734.2 1392.6 733.8 1393.2 733.4 1393.8 733.8 1394.4 733.5 1395.0 734.0 1395.6 733.5 1396.2 733.7 1396.8 733.8 1397.4 733.8 1398.1 733.7 1398.7 733.5 1399.3 733.8 1399.9 733.9 1400.5 734.2 1401.1 733.7 1401.7 733.5 1402.3 734.0 1402.9 733.9 1403.5 733.9 1404.1 733.4 1404.7 733.9 1405.3 734.0 1405.9 733.8 1406.5 734.2 1407.1 733.8 1407.7 734.2 1408.3 734.0 1409.0 734.2 1409.6 734.1 1410.2 734.5 1410.8 733.8 1411.4 733.8 1412.0 733.5 1412.6 733.7 1413.2 734.0 1413.8 733.7 1414.4 733.7 1415.0 733.3 1415.6 734.4 1416.2 733.5 1416.8 733.8 1417.4 734.0 1418.0 734.1 1418.6 733.6 1419.2 733.9 1419.9 733.1 1420.5 733.5 1421.1 733.6 1421.7 733.9 1422.3 734.3 1422.9 734.4 1423.5 734.4 1424.1 733.9 1424.7 733.6 1425.3 733.0 1425.9 733.8 1426.5 733.9 1427.1 733.0 1427.7 733.6 1428.3 734.0 1428.9 733.9 1429.5 734.6 1430.1 734.1 1430.8 734.0 1431.4 734.2 1432.0 733.5 1432.6 733.5 1433.2 733.1 1433.8 733.5 1434.4 733.6 1435.0 734.2 1435.6 734.2 1436.2 734.1 1436.8 733.6 1437.4 734.0 1438.0 733.6 1438.6 733.5 1439.2 733.2 1439.8 733.8 1440.4 733.6 1441.0 733.7 1441.6 733.6 1442.3 733.8 1442.9 734.5 1443.5 734.6 1444.1 733.8 1444.7 734.0 1445.3 733.7 1445.9 733.2 1446.5 733.5 1447.1 734.0 1447.7 733.3 1448.3 733.7 1448.9 733.8 1449.5 733.9 1450.1 734.1 1450.7 733.8 1451.3 734.1 1451.9 733.6 1452.5 733.7 1453.2 733.6 1453.8 733.8 1454.4 733.8 1455.0 733.8 1455.6 733.7 1456.2 733.8 1456.8 734.2 1457.4 734.0 1458.0 734.0 1458.6 734.0 1459.2 733.7 1459.8 734.0 1460.4 733.7 1461.0 733.3 1461.6 733.4 1462.2 734.0 1462.8 733.5 1463.4 733.9 1464.1 733.2 1464.7 734.2 1465.3 733.6 1465.9 733.6 1466.5 733.8 1467.1 733.6 1467.7 733.8 1468.3 734.1 1468.9 733.6 1469.5 734.0 1470.1 734.1 1470.7 733.8 1471.3 733.9 1471.9 733.6 1472.5 733.8 1473.1 733.5 1473.7 733.6 1474.3 733.6 1475.0 734.4 1475.6 734.3 1476.2 734.0 1476.8 734.1 1477.4 734.1 1478.0 733.6 1478.6 733.3 1479.2 733.7 1479.8 733.4 1480.4 733.5 1481.0 733.6 1481.6 733.6 1482.2 734.2 1482.8 733.8 1483.4 734.1 1484.0 733.8 1484.6 734.0 1485.2 733.5 1485.9 733.3 1486.5 733.6 1487.1 733.4 1487.7 733.7 1488.3 733.2 1488.9 734.1 1489.5 734.0 1490.1 734.0 1490.7 733.8 1491.3 733.8 1491.9 734.1 1492.5 733.0 1493.1 733.2 1493.7 733.7 1494.3 733.4 1494.9 733.8 1495.5 734.5 1496.1 734.2 1496.7 734.2 1497.4 734.0 1498.0 733.7 1498.6 733.4 1499.2 733.8 1499.8 733.1 1500.4 733.4 1501.0 733.6 1501.6 734.3 1502.2 733.9 1502.8 734.3 1503.4 733.9 1504.0 734.0 1504.6 733.2 1505.2 733.7 1505.8 733.6 1506.4 733.5 1507.0 734.0 1507.6 733.7 1508.3 733.9 1508.9 733.9 1509.5 734.1 1510.1 734.1 1510.7 734.0 1511.3 734.0 1511.9 733.9 1512.5 734.0 1513.1 733.5 1513.7 733.3 1514.3 733.4 1514.9 733.8 1515.5 734.4 1516.1 733.6 1516.7 733.7 1517.3 733.4 1517.9 733.7 1518.5 733.8 1519.2 733.9 1519.8 733.8 1520.4 733.5 1521.0 733.4 1521.6 733.9 1522.2 733.8 1522.8 733.8 1523.4 733.5 1524.0 733.7 1524.6 733.6 1525.2 734.1 1525.8 734.0 1526.4 733.5 1527.0 733.7 1527.6 733.3 1528.2 734.2 1528.8 734.2 1529.4 733.6 1530.1 734.2 1530.7 734.1 1531.3 733.9 1531.9 733.6 1532.5 733.1 1533.1 733.5 1533.7 733.6 1534.3 733.4 1534.9 733.7 1535.5 734.1 1536.1 734.6 1536.7 734.1 1537.3 734.2 1537.9 734.3 1538.5 733.2 1539.1 733.4 1539.7 733.6 1540.3 733.3 1541.0 733.5 1541.6 733.9 1542.2 733.8 1542.8 733.9 1543.4 734.0 1544.0 733.7 1544.6 733.8 1545.2 733.6 1545.8 733.8 1546.4 732.9 1547.0 733.9 1547.6 733.5 1548.2 733.5 1548.8 734.1 1549.4 734.0 1550.0 734.2 1550.6 734.0 1551.2 733.5 1551.8 733.7 1552.5 733.7 1553.1 733.5 1553.7 733.5 1554.3 733.8 1554.9 733.7 1555.5 734.1 1556.1 734.1 1556.7 734.3 1557.3 734.0 1557.9 733.8 1558.5 733.5 1559.1 733.6 1559.7 733.3 1560.3 733.5 1560.9 733.9 1561.5 733.5 1562.1 734.0 1562.7 734.4 1563.4 734.1 1564.0 733.9 1564.6 733.6 1565.2 733.7 1565.8 733.6 1566.4 734.1 1567.0 734.1 1567.6 733.8 1568.2 733.3 1568.8 733.9 1569.4 733.7 1570.0 734.1 1570.6 733.6 1571.2 733.8 1571.8 734.0 1572.4 733.6 1573.0 733.7 1573.6 733.8 1574.3 733.6 1574.9 733.5 1575.5 733.7 1576.1 733.6 1576.7 733.9 1577.3 733.5 1577.9 733.8 1578.5 733.6 1579.1 733.8 1579.7 733.7 1580.3 734.1 1580.9 733.7 1581.5 734.1 1582.1 734.1 1582.7 734.3 1583.3 734.2 1583.9 733.9 1584.5 734.2 1585.2 733.4 1585.8 733.5 1586.4 733.2 1587.0 733.5 1587.6 733.6 1588.2 733.9 1588.8 734.5 1589.4 734.1 1590.0 734.1 1590.6 734.2 1591.2 734.1 1591.8 733.5 1592.4 733.6 1593.0 733.6 1593.6 733.5 1594.2 734.1 1594.8 733.8 1595.4 733.7 1596.1 733.9 1596.7 734.1 1597.3 734.0 1597.9 733.8 1598.5 733.6 1599.1 733.6 1599.7 733.5 1600.3 733.4 1600.9 733.7 1601.5 734.0 1602.1 733.6 1602.7 734.4 1603.3 734.3 1603.9 733.8 1604.5 733.7 1605.1 733.9 1605.7 734.0 1606.3 733.6 1607.0 733.8 1607.6 733.8 1608.2 733.5 1608.8 733.8 1609.4 733.9 1610.0 734.1 1610.6 734.0 1611.2 733.7 1611.8 733.5 1612.4 733.5 1613.0 733.9 1613.6 733.8 1614.2 733.8 1614.8 734.0 1615.4 734.1 1616.0 734.2 1616.6 734.2 1617.2 734.0 1617.8 733.7 1618.5 733.4 1619.1 733.6 1619.7 733.7 1620.3 733.4 1620.9 734.0 1621.5 733.7 1622.1 734.0 1622.7 734.2 1623.3 734.5 1623.9 734.0 1624.5 733.8 1625.1 733.5 1625.7 733.5 1626.3 733.6 1626.9 733.8 1627.5 733.5 1628.1 733.9 1628.7 734.0 1629.4 734.0 1630.0 734.0 1630.6 734.0 1631.2 733.4 1631.8 733.5 1632.4 733.3 1633.0 732.8 1633.6 733.5 1634.2 733.8 1634.8 733.7 1635.4 734.2 1636.0 734.2 1636.6 733.9 1637.2 733.7 1637.8 733.5 1638.4 733.5 1639.0 733.8 1639.6 733.6 1640.3 733.9 1640.9 733.5 1641.5 733.6 1642.1 733.6 1642.7 734.1 1643.3 734.0 1643.9 733.4 1644.5 733.5 1645.1 733.6 1645.7 733.6 1646.3 733.7 1646.9 733.9 1647.5 734.0 1648.1 733.5 1648.7 734.0 1649.3 733.9 1649.9 733.8 1650.5 734.2 1651.2 733.6 1651.8 733.8 1652.4 733.8 1653.0 733.6 1653.6 733.5 1654.2 734.2 1654.8 733.7 1655.4 733.8 1656.0 733.8 1656.6 733.8 1657.2 733.7 1657.8 733.5 1658.4 733.7 1659.0 733.9 1659.6 733.8 1660.2 733.8 1660.8 733.9 1661.4 734.1 1662.1 734.2 1662.7 733.7 1663.3 734.3 1663.9 733.6 1664.5 733.2 1665.1 733.9 1665.7 734.0 1666.3 733.3 1666.9 733.4 1667.5 734.2 1668.1 733.7 1668.7 733.6 1669.3 733.9 1669.9 733.8 1670.5 733.8 1671.1 733.6 1671.7 733.7 1672.3 733.8 1673.0 734.0 1673.6 733.6 1674.2 733.8 1674.8 733.6 1675.4 733.6 1676.0 733.4 1676.6 733.9 1677.2 733.5 1677.8 733.9 1678.4 733.6 1679.0 733.8 1679.6 733.7 1680.2 733.7 1680.8 733.9 1681.4 733.9 1682.0 733.6 1682.6 734.0 1683.2 733.4 1683.8 733.8 1684.5 733.7 1685.1 733.9 1685.7 734.0 1686.3 733.9 1686.9 733.2 1687.5 733.6 1688.1 733.6 1688.7 733.5 1689.3 733.6 1689.9 733.8 1690.5 733.6 1691.1 733.6 1691.7 733.5 1692.3 733.7 1692.9 733.2 1693.5 733.6 1694.1 733.4 1694.7 734.2 1695.4 733.8 1696.0 734.5 1696.6 734.2 1697.2 733.9 1697.8 733.5 1698.4 733.6 1699.0 733.9 1699.6 733.4 1700.2 733.7 1700.8 733.3 1701.4 733.7 1702.0 733.8 1702.6 734.5 1703.2 733.7 1703.8 734.0 1704.4 734.0 1705.0 733.6 1705.6 733.9 1706.3 733.5 1706.9 733.7 1707.5 733.8 1708.1 734.2 1708.7 733.6 1709.3 734.1 1709.9 733.6 1710.5 733.9 1711.1 734.2 1711.7 733.7 1712.3 733.8 1712.9 733.7 1713.5 733.7 1714.1 733.9 1714.7 733.8 1715.3 733.7 1715.9 733.8 1716.5 733.9 1717.2 733.4 1717.8 733.6 1718.4 733.6 1719.0 733.9 1719.6 733.6 1720.2 733.3 1720.8 733.9 1721.4 733.5 1722.0 734.0 1722.6 733.3 1723.2 734.0 1723.8 733.8 1724.4 733.5 1725.0 734.2 1725.6 733.8 1726.2 733.6 1726.8 733.9 1727.4 734.0 1728.1 733.7 1728.7 734.0 1729.3 733.9 1729.9 734.3 1730.5 734.4 1731.1 733.6 1731.7 733.5 1732.3 733.5 1732.9 733.7 1733.5 733.8 1734.1 733.3 1734.7 733.7 1735.3 734.1 1735.9 734.0 1736.5 734.7 1737.1 734.0 1737.7 733.8 1738.3 734.2 1738.9 733.2 1739.6 733.7 1740.2 733.3 1740.8 733.9 1741.4 733.8 1742.0 733.5 1742.6 733.9 1743.2 734.0 1743.8 733.8 1744.4 733.3 1745.0 733.1" fill="none" stroke="#0000ff" stroke-opacity="0.62" stroke-width="1.15"/><rect x="1126.8" y="649.9" width="618.7" height="142.2" fill="none" stroke="#858585" stroke-width="2.1"/><text x="1093.6" y="655.7" textLength="28.9" lengthAdjust="spacingAndGlyphs">9000</text><text x="1093.6" y="690.7" textLength="28.9" lengthAdjust="spacingAndGlyphs">8500</text><text x="1093.6" y="725.7" textLength="28.9" lengthAdjust="spacingAndGlyphs">8000</text><text x="1093.6" y="760.7" textLength="28.9" lengthAdjust="spacingAndGlyphs">7500</text><text x="1093.6" y="795.7" textLength="28.9" lengthAdjust="spacingAndGlyphs">7000</text><text x="1124.7" y="806.7" textLength="7.2" lengthAdjust="spacingAndGlyphs">0</text><text x="1178.1" y="806.7" textLength="21.5" lengthAdjust="spacingAndGlyphs">100</text><text x="1238.7" y="806.7" textLength="21.5" lengthAdjust="spacingAndGlyphs">200</text><text x="1299.2" y="806.7" textLength="21.5" lengthAdjust="spacingAndGlyphs">300</text><text x="1359.8" y="806.7" textLength="21.5" lengthAdjust="spacingAndGlyphs">400</text><text x="1420.3" y="806.7" textLength="21.5" lengthAdjust="spacingAndGlyphs">500</text><text x="1480.9" y="806.7" textLength="21.5" lengthAdjust="spacingAndGlyphs">600</text><text x="1541.4" y="806.7" textLength="21.5" lengthAdjust="spacingAndGlyphs">700</text><text x="1602.0" y="806.7" textLength="21.5" lengthAdjust="spacingAndGlyphs">800</text><text x="1662.5" y="806.7" textLength="21.5" lengthAdjust="spacingAndGlyphs">900</text><text x="1719.5" y="806.7" textLength="28.6" lengthAdjust="spacingAndGlyphs">1000</text><rect x="1639.4" y="660.5" width="15" height="11" fill="#fff" stroke="#cfcfcf" stroke-width="1"/><rect x="1640.9" y="662.0" width="12" height="8" fill="#0000ff"/><text x="1658.3" y="669.9" fill="#858585" textLength="79.1" lengthAdjust="spacingAndGlyphs">aida07 1.8.W</text><path d="M1744.4 639.7L1755.4 650.7L1744.4 661.7L1733.4 650.7Z" fill="#ff0000"/></svg>
<svg width="1920" height="1080" font-family="Liberation Serif" font-size="11.8" fill="#666"><path d="M182.2 866.5H799.2" stroke="#e6e6e6" stroke-width="1.1"/><path d="M182.2 902.1H799.2" stroke="#e6e6e6" stroke-width="1.1"/><path d="M182.2 937.6H799.2" stroke="#e6e6e6" stroke-width="1.1"/><path d="M242.8 831.0V973.2" stroke="#e6e6e6" stroke-width="1.1"/><path d="M303.3 831.0V973.2" stroke="#e6e6e6" stroke-width="1.1"/><path d="M363.9 831.0V973.2" stroke="#e6e6e6" stroke-width="1.1"/><path d="M424.4 831.0V973.2" stroke="#e6e6e6" stroke-width="1.1"/><path d="M484.9 831.0V973.2" stroke="#e6e6e6" stroke-width="1.1"/><path d="M545.5 831.0V973.2" stroke="#e6e6e6" stroke-width="1.1"/><path d="M606.0 831.0V973.2" stroke="#e6e6e6" stroke-width="1.1"/><path d="M666.6 831.0V973.2" stroke="#e6e6e6" stroke-width="1.1"/><path d="M727.2 831.0V973.2" stroke="#e6e6e6" stroke-width="1.1"/><path d="M787.7 831.0V973.2" stroke="#e6e6e6" stroke-width="1.1"/><path d="M182.2 914.5 182.8 915.1 183.4 914.6 184.0 914.5 184.6 914.6 185.2 914.7 185.8 914.1 186.4 914.1 187.0 914.2 187.6 913.8 188.3 914.4 188.9 914.8 189.5 914.9 190.1 914.7 190.7 915.1 191.3 914.9 191.9 914.5 192.5 914.0 193.1 914.0 193.7 914.5 194.3 914.3 194.9 914.6 195.5 914.8 196.1 915.0 196.7 914.8 197.3 914.9 197.9 914.6 198.5 914.8 199.2 914.7 199.8 914.6 200.4 914.5 201.0 914.6 201.6 914.8 202.2 914.4 202.8 914.5 203.4 914.6 204.0 914.5 204.6 914.9 205.2 914.4 205.8 914.9 206.4 914.7 207.0 914.2 207.6 914.2 208.2 914.3 208.8 914.7 209.4 914.3 210.1 914.6 210.7 915.0 211.3 914.5 211.9 914.4 212.5 914.6 213.1 914.2 213.7 914.7 214.3 914.7 214.9 914.3 215.5 914.7 216.1 914.7 216.7 914.5 217.3 914.0 217.9 914.4 218.5 914.7 219.1 914.1 219.7 914.4 220.3 915.1 221.0 914.5 221.6 914.6 222.2 914.5 222.8 914.3 223.4 914.4 224.0 914.2 224.6 914.8 225.2 914.8 225.8 914.6 226.4 914.5 227.0 914.7 227.6 914.4 228.2 914.3 228.8 914.8 229.4 914.7 230.0 915.0 230.6 914.5 231.2 914.7 231.9 914.4 232.5 914.3 233.1 914.3 233.7 914.4 234.3 914.5 234.9 914.2 235.5 914.7 236.1 914.6 236.7 914.8 237.3 914.6 237.9 914.9 238.5 914.4 239.1 913.9 239.7 914.1 240.3 914.1 240.9 914.3 241.5 914.5 242.1 914.6 242.8 914.8 243.4 914.7 244.0 914.6 244.6 914.6 245.2 914.6 245.8 914.3 246.4 914.3 247.0 914.2 247.6 914.3 248.2 914.6 248.8 915.0 249.4 914.8 250.0 915.0 250.6 914.9 251.2 914.5 251.8 914.3 252.4 914.8 253.0 913.9 253.6 914.1 254.3 914.3 254.9 914.5 255.5 914.6 256.1 914.6 256.7 914.4 257.3 914.7 257.9 914.8 258.5 914.7 259.1 914.4 259.7 914.6 260.3 914.1 260.9 914.5 261.5 914.6 262.1 914.3 262.7 914.4 263.3 914.6 263.9 915.0 264.5 914.5 265.2 914.6 265.8 914.5 266.4 914.6 267.0 914.5 267.6 914.2 268.2 914.6 268.8 914.5 269.4 914.6 270.0 914.6 270.6 914.8 271.2 914.7 271.8 914.4 272.4 914.0 273.0 914.4 273.6 914.7 274.2 914.3 274.8 914.1 275.4 914.7 276.1 914.4 276.7 915.1 277.3 914.5 277.9 914.2 278.5 914.4 279.1 914.3 279.7 914.4 280.3 914.1 280.9 914.5 281.5 914.9 282.1 914.6 282.7 914.8 283.3 914.8 283.9 914.8 284.5 914.7 285.1 914.6 285.7 914.7 286.3 914.5 287.0 914.0 287.6 914.4 288.2 914.8 288.8 914.8 289.4 915.0 290.0 914.5 290.6 914.9 291.2 914.6 291.8 914.8 292.4 914.5 293.0 914.6 293.6 914.1 294.2 914.6 294.8 914.8 295.4 915.1 296.0 914.5 296.6 914.6 297.2 914.3 297.9 914.6 298.5 914.9 299.1 914.6 299.7 914.3 300.3 914.3 300.9 914.7 301.5 914.5 302.1 914.9 302.7 914.3 303.3 914.3 303.9 914.5 304.5 914.8 305.1 914.2 305.7 914.9 306.3 914.8 306.9 914.4 307.5 914.3 308.1 914.4 308.7 914.5 309.4 914.8 310.0 914.5 310.6 914.1 311.2 914.4 311.8 914.1 312.4 914.5 313.0 914.4 313.6 914.4 314.2 914.2 314.8 914.8 315.4 914.5 316.0 914.3 316.6 915.3 317.2 914.7 317.8 914.6 318.4 914.6 319.0 914.4 319.6 914.5 320.3 914.6 320.9 914.3 321.5 915.1 322.1 914.9 322.7 914.7 323.3 914.8 323.9 915.1 324.5 914.5 325.1 914.8 325.7 914.8 326.3 914.9 326.9 914.4 327.5 914.4 328.1 914.6 328.7 914.5 329.3 914.7 329.9 915.3 330.5 915.1 331.2 915.0 331.8 914.3 332.4 914.2 333.0 914.6 333.6 914.6 334.2 914.3 334.8 914.5 335.4 914.7 336.0 914.8 336.6 915.0 337.2 915.3 337.8 914.8 338.4 913.9 339.0 914.2 339.6 914.2 340.2 914.4 340.8 914.5 341.4 915.0 342.1 915.0 342.7 915.1 343.3 915.3 343.9 914.9 344.5 914.8 345.1 914.7 345.7 914.8 346.3 914.4 346.9 913.7 347.5 914.4 348.1 914.6 348.7 914.8 349.3 914.5 349.9 914.9 350.5 914.8 351.1 914.3 351.7 914.7 352.3 913.9 353.0 914.4 353.6 914.7 354.2 914.4 354.8 914.7 355.4 914.6 356.0 914.8 356.6 914.7 357.2 914.7 357.8 914.8 358.4 913.8 359.0 914.0 359.6 913.8 360.2 914.4 360.8 914.5 361.4 914.8 362.0 914.8 362.6 914.8 363.2 914.5 363.9 914.8 364.5 914.6 365.1 914.3 365.7 914.2 366.3 914.1 366.9 914.5 367.5 914.4 368.1 914.5 368.7 914.8 369.3 914.9 369.9 915.3 370.5 914.7 371.1 914.6 371.7 914.5 372.3 913.8 372.9 914.0 373.5 914.3 374.1 914.5 374.7 914.6 375.4 914.8 376.0 914.9 376.6 915.2 377.2 914.6 377.8 914.8 378.4 914.2 379.0 914.1 379.6 914.0 380.2 913.8 380.8 914.1 381.4 914.1 382.0 915.0 382.6 914.6 383.2 915.3 383.8 915.0 384.4 914.9 385.0 914.0 385.6 914.3 386.3 913.8 386.9 914.5 387.5 914.6 388.1 914.4 388.7 914.7 389.3 915.0 389.9 914.4 390.5 914.7 391.1 915.2 391.7 914.0 392.3 914.4 392.9 914.0 393.5 913.9 394.1 914.7 394.7 914.6 395.3 914.7 395.9 915.2 396.5 915.3 397.2 915.0 397.8 914.6 398.4 914.7 399.0 914.6 399.6 914.4 400.2 914.4 400.8 914.2 401.4 914.6 402.0 914.6 402.6 914.5 403.2 915.0 403.8 915.0 404.4 915.0 405.0 915.1 405.6 914.1 406.2 914.1 406.8 914.4 407.4 913.7 408.1 914.7 408.7 914.8 409.3 914.5 409.9 914.9 410.5 914.9 411.1 914.7 411.7 914.7 412.3 914.0 412.9 914.5 413.5 913.7 414.1 914.6 414.7 914.0 415.3 914.9 415.9 914.8 416.5 915.1 417.1 915.1 417.7 914.4 418.3 914.7 419.0 914.4 419.6 914.3 420.2 914.8 420.8 915.0 421.4 914.8 422.0 914.7 422.6 914.7 423.2 914.4 423.8 914.5 424.4 915.1 425.0 914.7 425.6 914.7 426.2 914.5 426.8 914.4 427.4 914.8 428.0 914.4 428.6 914.6 429.2 914.4 429.8 914.5 430.5 914.3 431.1 914.8 431.7 914.4 432.3 915.0 432.9 914.7 433.5 914.9 434.1 914.7 434.7 914.4 435.3 914.8 435.9 914.4 436.5 914.9 437.1 914.6 437.7 914.9 438.3 914.7 438.9 914.2 439.5 913.9 440.1 914.2 440.7 913.6 441.4 914.4 442.0 915.0 442.6 914.8 443.2 915.0 443.8 915.0 444.4 915.0 445.0 914.5 445.6 914.6 446.2 913.9 446.8 914.0 447.4 914.6 448.0 914.3 448.6 914.9 449.2 915.0 449.8 915.0 450.4 915.4 451.0 914.4 451.6 914.9 452.3 914.3 452.9 913.9 453.5 914.2 454.1 914.8 454.7 914.1 455.3 914.5 455.9 915.1 456.5 914.6 457.1 914.6 457.7 914.1 458.3 914.5 458.9 914.8 459.5 914.6 460.1 914.4 460.7 914.9 461.3 914.9 461.9 914.5 462.5 914.3 463.2 914.6 463.8 914.6 464.4 914.8 465.0 914.0 465.6 914.6 466.2 914.4 466.8 914.2 467.4 914.4 468.0 914.6 468.6 914.6 469.2 914.6 469.8 914.5 470.4 914.4 471.0 914.5 471.6 914.5 472.2 914.7 472.8 914.3 473.4 914.3 474.1 913.8 474.7 914.6 475.3 914.8 475.9 914.5 476.5 915.1 477.1 914.8 477.7 914.8 478.3 914.2 478.9 914.6 479.5 914.1 480.1 914.1 480.7 914.2 481.3 914.7 481.9 915.3 482.5 914.7 483.1 914.9 483.7 914.7 484.3 914.9 484.9 914.8 485.6 914.5 486.2 914.3 486.8 913.9 487.4 914.2 488.0 914.6 488.6 915.0 489.2 914.3 489.8 915.5 490.4 914.9 491.0 914.6 491.6 914.2 492.2 914.1 492.8 914.1 493.4 914.4 494.0 914.5 494.6 914.6 495.2 914.5 495.8 915.1 496.5 915.3 497.1 914.7 497.7 914.8 498.3 914.5 498.9 914.2 499.5 913.8 500.1 914.2 500.7 914.5 501.3 914.8 501.9 914.8 502.5 915.0 503.1 915.0 503.7 914.8 504.3 914.8 504.9 915.1 505.5 914.7 506.1 913.8 506.7 914.0 507.4 914.5 508.0 914.4 508.6 914.9 509.2 914.5 509.8 914.4 510.4 914.6 511.0 914.6 511.6 914.6 512.2 914.5 512.8 914.4 513.4 914.3 514.0 914.3 514.6 914.3 515.2 914.5 515.8 914.8 516.4 914.6 517.0 914.3 517.6 914.3 518.3 914.6 518.9 914.7 519.5 914.0 520.1 914.4 520.7 914.8 521.3 915.2 521.9 914.4 522.5 914.7 523.1 914.7 523.7 914.3 524.3 914.6 524.9 914.7 525.5 913.9 526.1 914.2 526.7 914.1 527.3 914.5 527.9 914.5 528.5 914.8 529.2 914.6 529.8 914.8 530.4 914.7 531.0 914.3 531.6 914.9 532.2 914.5 532.8 914.3 533.4 914.4 534.0 914.7 534.6 914.7 535.2 914.8 535.8 914.8 536.4 914.5 537.0 914.6 537.6 914.3 538.2 914.9 538.8 914.3 539.4 914.9 540.1 914.3 540.7 914.3 541.3 915.1 541.9 914.7 542.5 914.9 543.1 914.7 543.7 915.1 544.3 914.6 544.9 914.8 545.5 914.2 546.1 914.9 546.7 914.3 547.3 914.2 547.9 914.6 548.5 914.3 549.1 915.1 549.7 914.8 550.3 915.1 550.9 914.6 551.6 914.4 552.2 914.5 552.8 914.4 553.4 914.3 554.0 915.0 554.6 914.7 555.2 914.7 555.8 914.8 556.4 914.6 557.0 914.7 557.6 914.7 558.2 914.7 558.8 914.4 559.4 914.6 560.0 914.5 560.6 914.6 561.2 914.2 561.8 914.7 562.5 915.2 563.1 914.8 563.7 914.9 564.3 914.5 564.9 914.4 565.5 914.7 566.1 914.7 566.7 914.5 567.3 914.8 567.9 914.5 568.5 914.6 569.1 914.7 569.7 914.4 570.3 914.6 570.9 914.4 571.5 914.8 572.1 914.2 572.7 915.0 573.4 914.3 574.0 914.9 574.6 914.5 575.2 914.7 575.8 914.5 576.4 914.4 577.0 914.6 577.6 914.4 578.2 914.4 578.8 914.6 579.4 914.3 580.0 914.5 580.6 914.6 581.2 914.5 581.8 914.6 582.4 914.7 583.0 914.4 583.6 914.7 584.3 914.1 584.9 914.2 585.5 915.1 586.1 915.0 586.7 914.7 587.3 914.5 587.9 914.4 588.5 914.7 589.1 914.2 589.7 914.0 590.3 914.7 590.9 914.3 591.5 914.7 592.1 914.3 592.7 914.4 593.3 914.6 593.9 914.5 594.5 914.5 595.2 914.6 595.8 914.8 596.4 914.7 597.0 914.3 597.6 914.2 598.2 914.9 598.8 914.8 599.4 914.6 600.0 914.2 600.6 913.7 601.2 914.3 601.8 914.7 602.4 914.6 603.0 915.3 603.6 915.0 604.2 914.7 604.8 914.4 605.4 914.2 606.0 914.2 606.7 914.2 607.3 914.4 607.9 914.6 608.5 914.7 609.1 915.1 609.7 914.7 610.3 915.0 610.9 914.8 611.5 914.2 612.1 913.9 612.7 913.8 613.3 914.2 613.9 914.4 614.5 914.6 615.1 915.2 615.7 915.1 616.3 914.9 616.9 915.0 617.6 915.0 618.2 914.4 618.8 914.1 619.4 914.4 620.0 914.6 620.6 914.6 621.2 914.3 621.8 914.9 622.4 914.6 623.0 914.2 623.6 915.1 624.2 914.5 624.8 914.2 625.4 914.5 626.0 914.0 626.6 914.5 627.2 914.6 627.8 914.4 628.5 914.5 629.1 914.7 629.7 914.6 630.3 914.7 630.9 914.5 631.5 914.9 632.1 914.4 632.7 914.3 633.3 914.5 633.9 914.4 634.5 915.1 635.1 914.5 635.7 914.9 636.3 914.6 636.9 914.9 637.5 914.5 638.1 914.6 638.7 914.6 639.4 914.6 640.0 914.2 640.6 914.1 641.2 914.5 641.8 914.5 642.4 914.2 643.0 914.9 643.6 914.8 644.2 915.3 644.8 914.5 645.4 914.7 646.0 913.8 646.6 914.5 647.2 914.2 647.8 915.0 648.4 914.5 649.0 914.7 649.6 914.2 650.3 915.1 650.9 914.2 651.5 914.4 652.1 914.2 652.7 914.5 653.3 914.8 653.9 914.4 654.5 914.3 655.1 914.9 655.7 915.0 656.3 915.0 656.9 915.0 657.5 914.6 658.1 914.2 658.7 914.5 659.3 914.1 659.9 914.1 660.5 914.6 661.2 914.3 661.8 914.3 662.4 915.1 663.0 915.3 663.6 914.9 664.2 914.7 664.8 914.4 665.4 914.3 666.0 914.3 666.6 914.1 667.2 914.0 667.8 914.6 668.4 914.8 669.0 915.4 669.6 914.9 670.2 915.1 670.8 914.5 671.4 914.2 672.0 914.1 672.7 914.4 673.3 914.5 673.9 914.2 674.5 914.8 675.1 915.4 675.7 914.6 676.3 914.8 676.9 914.7 677.5 914.8 678.1 914.2 678.7 914.9 679.3 914.6 679.9 914.5 680.5 914.8 681.1 914.7 681.7 914.3 682.3 914.8 682.9 914.9 683.6 915.2 684.2 914.4 684.8 914.7 685.4 914.4 686.0 914.8 686.6 914.6 687.2 914.8 687.8 914.6 688.4 914.3 689.0 914.5 689.6 915.1 690.2 914.7 690.8 914.9 691.4 914.2 692.0 914.5 692.6 914.0 693.2 914.2 693.8 914.7 694.5 914.4 695.1 914.6 695.7 914.9 696.3 915.1 696.9 914.6 697.5 914.8 698.1 914.2 698.7 914.8 699.3 914.4 699.9 914.7 700.5 914.6 701.1 914.5 701.7 914.8 702.3 914.8 702.9 914.7 703.5 914.8 704.1 915.0 704.7 914.4 705.4 914.3 706.0 914.3 706.6 913.7 707.2 914.2 707.8 914.6 708.4 915.0 709.0 915.0 709.6 914.7 710.2 914.3 710.8 914.9 711.4 914.9 712.0 914.9 712.6 914.2 713.2 914.1 713.8 914.5 714.4 914.7 715.0 914.4 715.6 914.7 716.3 915.0 716.9 914.7 717.5 914.5 718.1 914.6 718.7 914.1 719.3 914.2 719.9 914.6 720.5 914.2 721.1 914.9 721.7 914.8 722.3 914.9 722.9 914.7 723.5 914.8 724.1 914.6 724.7 914.7 725.3 914.3 725.9 914.1 726.5 914.4 727.2 914.6 727.8 914.1 728.4 914.8 729.0 915.0 729.6 915.3 730.2 915.1 730.8 914.4 731.4 913.9 732.0 914.2 732.6 914.6 733.2 914.1 733.8 914.0 734.4 914.3 735.0 914.7 735.6 915.0 736.2 914.7 736.8 914.4 737.4 915.2 738.0 914.4 738.7 914.2 739.3 914.0 739.9 914.1 740.5 913.6 741.1 914.7 741.7 914.5 742.3 915.0 742.9 915.4 743.5 914.4 744.1 915.0 744.7 914.8 745.3 914.2 745.9 914.6 746.5 914.3 747.1 914.8 747.7 914.1 748.3 914.4 748.9 914.5 749.6 914.7 750.2 914.6 750.8 915.1 751.4 914.8 752.0 914.3 752.6 914.7 753.2 913.9 753.8 914.6 754.4 914.4 755.0 914.0 755.6 915.7 756.2 914.6 756.8 914.7 757.4 914.6 758.0 914.7 758.6 914.1 759.2 914.3 759.8 914.4 760.5 914.1 761.1 914.6 761.7 914.7 762.3 914.5 762.9 914.5 763.5 914.7 764.1 914.4 764.7 914.8 765.3 915.1 765.9 914.3 766.5 914.4 767.1 914.3 767.7 914.5 768.3 914.9 768.9 914.5 769.5 915.0 770.1 914.5 770.7 914.6 771.4 914.5 772.0 914.0 772.6 914.6 773.2 914.5 773.8 914.7 774.4 914.7 775.0 914.8 775.6 914.6 776.2 914.5 776.8 914.6 777.4 914.6 778.0 914.3 778.6 914.3 779.2 914.0 779.8 914.4 780.4 914.7 781.0 914.1 781.6 914.5 782.3 914.7 782.9 914.4 783.5 914.2 784.1 914.5 784.7 914.5 785.3 914.4 785.9 914.3 786.5 914.4 787.1 915.0 787.7 914.6 788.3 914.9 788.9 914.3 789.5 914.8 790.1 915.0 790.7 914.4 791.3 914.5 791.9 914.8 792.5 914.2 793.1 914.7 793.8 914.0 794.4 914.7 795.0 914.5 795.6 914.5 796.2 914.6 796.8 914.3 797.4 914.4 798.0 914.3 798.6 914.4 799.2 914.9" fill="none" stroke="#0000ff" stroke-opacity="0.62" stroke-width="1.15"/><rect x="181.0" y="831.0" width="618.7" height="142.2" fill="none" stroke="#858585" stroke-width="2.1"/><text x="147.8" y="836.8" textLength="28.9" lengthAdjust="spacingAndGlyphs">9000</text><text x="147.8" y="871.8" textLength="28.9" lengthAdjust="spacingAndGlyphs">8500</text><text x="147.8" y="906.8" textLength="28.9" lengthAdjust="spacingAndGlyphs">8000</text><text x="147.8" y="941.8" textLength="28.9" lengthAdjust="spacingAndGlyphs">7500</text><text x="147.8" y="976.8" textLength="28.9" lengthAdjust="spacingAndGlyphs">7000</text><text x="178.9" y="987.8" textLength="7.2" lengthAdjust="spacingAndGlyphs">0</text><text x="232.3" y="987.8" textLength="21.5" lengthAdjust="spacingAndGlyphs">100</text><text x="292.9" y="987.8" textLength="21.5" lengthAdjust="spacingAndGlyphs">200</text><text x="353.4" y="987.8" textLength="21.5" lengthAdjust="spacingAndGlyphs">300</text><text x="414.0" y="987.8" textLength="21.5" lengthAdjust="spacingAndGlyphs">400</text><text x="474.5" y="987.8" textLength="21.5" lengthAdjust="spacingAndGlyphs">500</text><text x="535.1" y="987.8" textLength="21.5" lengthAdjust="spacingAndGlyphs">600</text><text x="595.6" y="987.8" textLength="21.5" lengthAdjust="spacingAndGlyphs">700</text><text x="656.2" y="987.8" textLength="21.5" lengthAdjust="spacingAndGlyphs">800</text><text x="716.7" y="987.8" textLength="21.5" lengthAdjust="spacingAndGlyphs">900</text><text x="773.7" y="987.8" textLength="28.6" lengthAdjust="spacingAndGlyphs">1000</text><rect x="693.6" y="841.6" width="15" height="11" fill="#fff" stroke="#cfcfcf" stroke-width="1"/><rect x="695.1" y="843.1" width="12" height="8" fill="#0000ff"/><text x="712.5" y="851.0" fill="#858585" textLength="79.1" lengthAdjust="spacingAndGlyphs">aida03 1.8.W</text><path d="M798.6 820.8L809.6 831.8L798.6 842.8L787.6 831.8Z" fill="#ff0000"/></svg>
<svg width="1920" height="1080" font-family="Liberation Serif" font-size="11.8" fill="#666"><path d="M1128.0 866.5H1745.0" stroke="#d2d2d2" stroke-width="1.1"/><path d="M1128.0 902.1H1745.0" stroke="#d2d2d2" stroke-width="1.1"/><path d="M1128.0 937.6H1745.0" stroke="#d2d2d2" stroke-width="1.1"/><path d="M1188.5 831.0V973.2" stroke="#d2d2d2" stroke-width="1.1"/><path d="M1249.1 831.0V973.2" stroke="#d2d2d2" stroke-width="1.1"/><path d="M1309.7 831.0V973.2" stroke="#d2d2d2" stroke-width="1.1"/><path d="M1370.2 831.0V973.2" stroke="#d2d2d2" stroke-width="1.1"/><path d="M1430.8 831.0V973.2" stroke="#d2d2d2" stroke-width="1.1"/><path d="M1491.3 831.0V973.2" stroke="#d2d2d2" stroke-width="1.1"/><path d="M1551.8 831.0V973.2" stroke="#d2d2d2" stroke-width="1.1"/><path d="M1612.4 831.0V973.2" stroke="#d2d2d2" stroke-width="1.1"/><path d="M1673.0 831.0V973.2" stroke="#d2d2d2" stroke-width="1.1"/><path d="M1733.5 831.0V973.2" stroke="#d2d2d2" stroke-width="1.1"/><path d="M1128.0 913.4 1128.6 914.1 1129.2 913.9 1129.8 913.7 1130.4 913.7 1131.0 913.2 1131.6 913.3 1132.2 913.2 1132.8 912.8 1133.4 913.6 1134.1 913.6 1134.7 914.1 1135.3 914.0 1135.9 914.2 1136.5 913.2 1137.1 913.5 1137.7 913.5 1138.3 913.4 1138.9 912.9 1139.5 913.2 1140.1 912.8 1140.7 913.2 1141.3 913.4 1141.9 913.9 1142.5 914.0 1143.1 913.7 1143.7 913.5 1144.3 913.5 1145.0 913.2 1145.6 913.2 1146.2 913.5 1146.8 913.7 1147.4 913.6 1148.0 913.6 1148.6 913.1 1149.2 914.3 1149.8 912.8 1150.4 913.7 1151.0 913.5 1151.6 913.6 1152.2 913.2 1152.8 913.3 1153.4 913.2 1154.0 913.3 1154.6 913.3 1155.2 913.6 1155.9 913.0 1156.5 913.4 1157.1 913.5 1157.7 913.5 1158.3 913.1 1158.9 913.5 1159.5 913.6 1160.1 913.2 1160.7 913.6 1161.3 913.2 1161.9 913.5 1162.5 913.5 1163.1 913.5 1163.7 913.8 1164.3 913.5 1164.9 913.7 1165.5 913.6 1166.1 913.8 1166.8 913.5 1167.4 912.9 1168.0 913.9 1168.6 913.7 1169.2 913.3 1169.8 913.8 1170.4 913.1 1171.0 913.6 1171.6 913.5 1172.2 913.5 1172.8 913.5 1173.4 913.6 1174.0 913.1 1174.6 913.6 1175.2 913.6 1175.8 913.7 1176.4 913.8 1177.0 913.4 1177.7 913.6 1178.3 913.5 1178.9 913.2 1179.5 913.5 1180.1 914.0 1180.7 913.4 1181.3 913.6 1181.9 913.5 1182.5 913.8 1183.1 913.4 1183.7 913.8 1184.3 913.5 1184.9 913.4 1185.5 913.7 1186.1 913.1 1186.7 913.3 1187.3 913.3 1187.9 913.7 1188.5 913.9 1189.2 913.2 1189.8 913.6 1190.4 913.6 1191.0 913.8 1191.6 912.9 1192.2 913.3 1192.8 913.3 1193.4 913.4 1194.0 913.7 1194.6 913.6 1195.2 913.6 1195.8 913.6 1196.4 913.4 1197.0 913.2 1197.6 913.4 1198.2 913.4 1198.8 913.1 1199.4 913.1 1200.1 913.4 1200.7 913.7 1201.3 913.6 1201.9 913.7 1202.5 914.1 1203.1 913.5 1203.7 914.0 1204.3 912.9 1204.9 913.2 1205.5 912.7 1206.1 912.7 1206.7 913.2 1207.3 913.7 1207.9 913.5 1208.5 913.9 1209.1 913.9 1209.7 914.3 1210.3 914.1 1211.0 913.6 1211.6 913.4 1212.2 913.4 1212.8 913.4 1213.4 913.1 1214.0 913.3 1214.6 913.6 1215.2 913.8 1215.8 913.5 1216.4 913.5 1217.0 913.5 1217.6 913.7 1218.2 913.5 1218.8 914.0 1219.4 913.3 1220.0 913.1 1220.6 913.2 1221.2 913.5 1221.9 913.7 1222.5 913.5 1223.1 913.3 1223.7 913.7 1224.3 913.3 1224.9 913.3 1225.5 913.4 1226.1 913.3 1226.7 913.4 1227.3 913.3 1227.9 913.4 1228.5 913.2 1229.1 913.2 1229.7 913.7 1230.3 913.3 1230.9 913.2 1231.5 913.4 1232.1 913.4 1232.8 913.5 1233.4 913.2 1234.0 913.5 1234.6 913.6 1235.2 913.5 1235.8 913.1 1236.4 913.6 1237.0 913.7 1237.6 913.8 1238.2 913.1 1238.8 912.8 1239.4 913.2 1240.0 913.3 1240.6 913.1 1241.2 913.5 1241.8 913.9 1242.4 913.5 1243.0 914.0 1243.7 913.9 1244.3 913.7 1244.9 913.3 1245.5 913.2 1246.1 913.3 1246.7 913.0 1247.3 914.7 1247.9 913.8 1248.5 912.2 1249.1 913.6 1249.7 915.0 1250.3 913.4 1250.9 911.6 1251.5 913.7 1252.1 911.8 1252.7 913.3 1253.3 914.7 1253.9 913.5 1254.5 912.2 1255.2 913.9 1255.8 915.2 1256.4 914.1 1257.0 912.2 1257.6 913.8 1258.2 912.8 1258.8 913.2 1259.4 912.9 1260.0 913.6 1260.6 913.7 1261.2 913.9 1261.8 914.0 1262.4 913.7 1263.0 914.0 1263.6 913.7 1264.2 913.5 1264.8 913.1 1265.4 913.1 1266.1 913.2 1266.7 913.0 1267.3 913.6 1267.9 913.7 1268.5 913.3 1269.1 913.7 1269.7 914.0 1270.3 913.8 1270.9 913.3 1271.5 913.1 1272.1 913.2 1272.7 913.2 1273.3 913.7 1273.9 913.5 1274.5 913.4 1275.1 913.7 1275.7 913.4 1276.3 913.6 1277.0 913.7 1277.6 913.7 1278.2 913.3 1278.8 912.9 1279.4 913.3 1280.0 913.1 1280.6 913.3 1281.2 913.5 1281.8 914.1 1282.4 914.1 1283.0 913.8 1283.6 913.6 1284.2 913.1 1284.8 913.1 1285.4 913.4 1286.0 912.9 1286.6 913.6 1287.2 913.2 1287.9 913.7 1288.5 913.4 1289.1 913.8 1289.7 913.4 1290.3 913.6 1290.9 913.6 1291.5 913.7 1292.1 913.3 1292.7 913.9 1293.3 913.1 1293.9 913.1 1294.5 913.6 1295.1 913.3 1295.7 913.2 1296.3 913.8 1296.9 913.5 1297.5 913.1 1298.1 913.3 1298.8 913.5 1299.4 913.2 1300.0 913.4 1300.6 913.4 1301.2 913.5 1301.8 913.8 1302.4 913.3 1303.0 913.7 1303.6 913.4 1304.2 913.6 1304.8 913.3 1305.4 913.8 1306.0 913.6 1306.6 913.4 1307.2 913.7 1307.8 914.2 1308.4 913.1 1309.0 913.6 1309.7 913.6 1310.3 913.1 1310.9 913.4 1311.5 913.2 1312.1 913.7 1312.7 913.2 1313.3 913.5 1313.9 913.5 1314.5 914.0 1315.1 913.1 1315.7 913.8 1316.3 913.6 1316.9 913.4 1317.5 913.8 1318.1 913.2 1318.7 913.2 1319.3 913.2 1319.9 913.9 1320.5 913.4 1321.2 913.8 1321.8 913.1 1322.4 913.2 1323.0 913.7 1323.6 913.5 1324.2 913.6 1324.8 913.2 1325.4 914.0 1326.0 913.0 1326.6 913.8 1327.2 913.5 1327.8 913.4 1328.4 913.2 1329.0 913.5 1329.6 913.8 1330.2 913.6 1330.8 913.6 1331.4 913.0 1332.1 913.0 1332.7 913.7 1333.3 913.8 1333.9 913.8 1334.5 914.0 1335.1 913.6 1335.7 913.7 1336.3 913.6 1336.9 912.9 1337.5 913.9 1338.1 913.3 1338.7 913.4 1339.3 913.2 1339.9 913.1 1340.5 913.7 1341.1 913.2 1341.7 913.6 1342.3 913.6 1343.0 913.6 1343.6 913.4 1344.2 913.8 1344.8 913.4 1345.4 913.5 1346.0 913.8 1346.6 913.4 1347.2 913.6 1347.8 913.2 1348.4 913.9 1349.0 913.4 1349.6 913.3 1350.2 913.3 1350.8 913.6 1351.4 913.4 1352.0 913.2 1352.6 913.5 1353.2 913.8 1353.9 913.2 1354.5 913.7 1355.1 913.7 1355.7 913.8 1356.3 914.1 1356.9 913.5 1357.5 913.4 1358.1 913.6 1358.7 913.6 1359.3 913.7 1359.9 912.9 1360.5 913.2 1361.1 913.8 1361.7 913.3 1362.3 913.3 1362.9 913.5 1363.5 913.5 1364.1 913.4 1364.8 913.1 1365.4 913.6 1366.0 913.2 1366.6 913.1 1367.2 913.5 1367.8 913.6 1368.4 914.0 1369.0 913.9 1369.6 914.1 1370.2 913.6 1370.8 913.8 1371.4 913.6 1372.0 912.9 1372.6 912.9 1373.2 913.0 1373.8 913.6 1374.4 913.5 1375.0 913.5 1375.6 913.7 1376.3 913.6 1376.9 913.6 1377.5 913.2 1378.1 913.1 1378.7 913.0 1379.3 913.2 1379.9 913.0 1380.5 913.4 1381.1 914.2 1381.7 913.7 1382.3 913.3 1382.9 913.4 1383.5 913.0 1384.1 913.5 1384.7 913.9 1385.3 913.2 1385.9 912.8 1386.5 913.0 1387.2 913.7 1387.8 913.2 1388.4 913.4 1389.0 913.6 1389.6 914.0 1390.2 913.7 1390.8 913.6 1391.4 913.3 1392.0 913.8 1392.6 913.6 1393.2 913.4 1393.8 913.4 1394.4 913.3 1395.0 913.6 1395.6 913.6 1396.2 914.0 1396.8 913.9 1397.4 913.4 1398.1 913.2 1398.7 913.1 1399.3 913.4 1399.9 913.4 1400.5 913.6 1401.1 913.2 1401.7 913.8 1402.3 913.5 1402.9 913.7 1403.5 913.8 1404.1 913.6 1404.7 913.1 1405.3 913.2 1405.9 912.9 1406.5 912.8 1407.1 913.2 1407.7 913.7 1408.3 913.7 1409.0 914.2 1409.6 914.1 1410.2 913.5 1410.8 913.4 1411.4 913.2 1412.0 912.5 1412.6 913.1 1413.2 913.0 1413.8 912.9 1414.4 913.6 1415.0 913.7 1415.6 913.8 1416.2 913.8 1416.8 913.6 1417.4 913.5 1418.0 913.1 1418.6 913.6 1419.2 913.4 1419.9 913.4 1420.5 913.3 1421.1 913.8 1421.7 913.5 1422.3 913.5 1422.9 913.8 1423.5 913.2 1424.1 913.8 1424.7 913.6 1425.3 913.4 1425.9 913.3 1426.5 912.8 1427.1 913.3 1427.7 913.6 1428.3 913.8 1428.9 913.9 1429.5 913.6 1430.1 913.3 1430.8 913.7 1431.4 913.4 1432.0 913.8 1432.6 913.3 1433.2 913.3 1433.8 913.5 1434.4 913.4 1435.0 913.8 1435.6 914.3 1436.2 913.4 1436.8 913.7 1437.4 913.4 1438.0 913.2 1438.6 913.2 1439.2 912.8 1439.8 913.6 1440.4 913.5 1441.0 913.4 1441.6 914.0 1442.3 914.0 1442.9 913.8 1443.5 914.2 1444.1 913.6 1444.7 913.2 1445.3 913.2 1445.9 913.1 1446.5 913.0 1447.1 913.1 1447.7 913.5 1448.3 913.9 1448.9 914.1 1449.5 913.7 1450.1 914.0 1450.7 913.3 1451.3 913.3 1451.9 912.5 1452.5 912.5 1453.2 913.1 1453.8 912.9 1454.4 913.6 1455.0 913.6 1455.6 913.3 1456.2 913.3 1456.8 913.3 1457.4 913.3 1458.0 913.4 1458.6 913.5 1459.2 913.0 1459.8 913.5 1460.4 913.4 1461.0 913.5 1461.6 913.4 1462.2 913.6 1462.8 913.6 1463.4 913.3 1464.1 912.8 1464.7 913.3 1465.3 912.1 1465.9 913.0 1466.5 911.5 1467.1 913.4 1467.7 914.6 1468.3 913.6 1468.9 915.0 1469.5 913.6 1470.1 914.7 1470.7 913.5 1471.3 914.7 1471.9 913.4 1472.5 911.6 1473.1 913.4 1473.7 912.0 1474.3 913.3 1475.0 911.6 1475.6 913.7 1476.2 913.4 1476.8 913.9 1477.4 913.9 1478.0 912.6 1478.6 912.9 1479.2 912.9 1479.8 913.1 1480.4 913.7 1481.0 913.3 1481.6 913.7 1482.2 913.6 1482.8 913.9 1483.4 913.5 1484.0 913.6 1484.6 913.2 1485.2 913.4 1485.9 913.2 1486.5 913.1 1487.1 913.3 1487.7 913.3 1488.3 913.9 1488.9 913.7 1489.5 913.8 1490.1 914.0 1490.7 913.6 1491.3 913.3 1491.9 913.0 1492.5 912.7 1493.1 913.0 1493.7 913.3 1494.3 913.6 1494.9 914.1 1495.5 913.8 1496.1 914.2 1496.7 914.0 1497.4 913.5 1498.0 913.3 1498.6 913.4 1499.2 913.0 1499.8 913.1 1500.4 913.2 1501.0 913.6 1501.6 913.8 1502.2 914.1 1502.8 913.9 1503.4 913.7 1504.0 913.4 1504.6 913.0 1505.2 912.7 1505.8 913.1 1506.4 913.3 1507.0 913.6 1507.6 913.8 1508.3 913.1 1508.9 914.3 1509.5 913.4 1510.1 913.5 1510.7 913.4 1511.3 913.4 1511.9 913.9 1512.5 913.3 1513.1 913.6 1513.7 913.9 1514.3 913.2 1514.9 913.4 1515.5 913.3 1516.1 913.6 1516.7 913.6 1517.3 913.0 1517.9 913.8 1518.5 914.0 1519.2 913.2 1519.8 913.3 1520.4 913.0 1521.0 913.6 1521.6 913.0 1522.2 913.2 1522.8 913.4 1523.4 913.7 1524.0 913.0 1524.6 913.7 1525.2 913.3 1525.8 913.5 1526.4 912.9 1527.0 913.5 1527.6 913.9 1528.2 913.5 1528.8 913.5 1529.4 914.4 1530.1 913.5 1530.7 913.8 1531.3 912.7 1531.9 913.1 1532.5 912.8 1533.1 913.2 1533.7 913.0 1534.3 913.1 1534.9 913.6 1535.5 913.6 1536.1 913.5 1536.7 913.3 1537.3 913.0 1537.9 913.2 1538.5 913.2 1539.1 913.0 1539.7 913.5 1540.3 913.8 1541.0 912.9 1541.6 913.7 1542.2 913.4 1542.8 913.9 1543.4 913.7 1544.0 913.3 1544.6 913.7 1545.2 913.4 1545.8 913.5 1546.4 913.2 1547.0 913.8 1547.6 913.3 1548.2 914.1 1548.8 913.7 1549.4 913.8 1550.0 913.9 1550.6 913.4 1551.2 913.2 1551.8 913.3 1552.5 913.3 1553.1 913.3 1553.7 913.2 1554.3 913.5 1554.9 913.8 1555.5 913.3 1556.1 913.7 1556.7 913.3 1557.3 914.1 1557.9 913.6 1558.5 913.3 1559.1 913.4 1559.7 913.3 1560.3 913.4 1560.9 913.6 1561.5 913.9 1562.1 914.0 1562.7 913.3 1563.4 913.5 1564.0 912.9 1564.6 913.9 1565.2 913.2 1565.8 913.2 1566.4 913.6 1567.0 913.3 1567.6 913.5 1568.2 913.2 1568.8 913.8 1569.4 913.4 1570.0 912.9 1570.6 913.4 1571.2 913.5 1571.8 913.4 1572.4 913.4 1573.0 913.7 1573.6 913.3 1574.3 913.6 1574.9 913.7 1575.5 913.4 1576.1 913.7 1576.7 913.0 1577.3 913.9 1577.9 913.8 1578.5 913.6 1579.1 913.4 1579.7 913.5 1580.3 914.1 1580.9 913.3 1581.5 913.3 1582.1 913.8 1582.7 914.3 1583.3 914.0 1583.9 913.3 1584.5 913.2 1585.2 912.8 1585.8 913.1 1586.4 913.1 1587.0 913.5 1587.6 914.0 1588.2 913.2 1588.8 914.3 1589.4 913.8 1590.0 913.6 1590.6 913.3 1591.2 913.1 1591.8 913.4 1592.4 912.8 1593.0 912.9 1593.6 913.5 1594.2 914.0 1594.8 913.5 1595.4 914.0 1596.1 913.9 1596.7 913.6 1597.3 913.2 1597.9 913.3 1598.5 912.5 1599.1 913.2 1599.7 913.2 1600.3 913.6 1600.9 913.6 1601.5 913.1 1602.1 913.6 1602.7 913.3 1603.3 913.4 1603.9 913.9 1604.5 913.7 1605.1 913.2 1605.7 913.4 1606.3 913.5 1607.0 913.3 1607.6 913.9 1608.2 913.5 1608.8 913.8 1609.4 913.7 1610.0 913.2 1610.6 913.4 1611.2 913.7 1611.8 913.4 1612.4 912.7 1613.0 913.7 1613.6 913.5 1614.2 913.5 1614.8 913.4 1615.4 913.3 1616.0 913.2 1616.6 913.7 1617.2 913.8 1617.8 913.2 1618.5 913.5 1619.1 913.3 1619.7 913.7 1620.3 913.9 1620.9 913.7 1621.5 913.7 1622.1 913.8 1622.7 913.4 1623.3 913.3 1623.9 913.0 1624.5 913.4 1625.1 913.6 1625.7 913.1 1626.3 913.4 1626.9 913.9 1627.5 913.5 1628.1 913.7 1628.7 913.3 1629.4 913.6 1630.0 913.8 1630.6 913.4 1631.2 913.6 1631.8 913.6 1632.4 913.2 1633.0 913.5 1633.6 913.0 1634.2 913.5 1634.8 913.8 1635.4 913.3 1636.0 913.7 1636.6 913.7 1637.2 913.2 1637.8 912.9 1638.4 912.8 1639.0 913.2 1639.6 913.4 1640.3 913.2 1640.9 913.8 1641.5 913.7 1642.1 913.9 1642.7 913.8 1643.3 913.7 1643.9 913.3 1644.5 913.3 1645.1 912.7 1645.7 912.7 1646.3 913.2 1646.9 913.4 1647.5 913.7 1648.1 913.4 1648.7 914.0 1649.3 913.7 1649.9 913.7 1650.5 913.7 1651.2 913.3 1651.8 912.9 1652.4 913.0 1653.0 913.3 1653.6 913.1 1654.2 913.3 1654.8 913.5 1655.4 913.8 1656.0 914.3 1656.6 913.7 1657.2 913.7 1657.8 913.6 1658.4 913.3 1659.0 913.5 1659.6 913.2 1660.2 913.7 1660.8 913.3 1661.4 913.7 1662.1 913.3 1662.7 913.6 1663.3 913.5 1663.9 913.8 1664.5 913.0 1665.1 913.0 1665.7 913.4 1666.3 913.4 1666.9 913.4 1667.5 913.5 1668.1 913.5 1668.7 913.5 1669.3 913.6 1669.9 914.3 1670.5 913.1 1671.1 913.2 1671.7 913.2 1672.3 913.1 1673.0 913.6 1673.6 913.6 1674.2 913.8 1674.8 913.7 1675.4 913.7 1676.0 913.7 1676.6 913.5 1677.2 913.3 1677.8 913.7 1678.4 913.3 1679.0 912.8 1679.6 913.6 1680.2 913.8 1680.8 912.9 1681.4 913.5 1682.0 913.7 1682.6 913.5 1683.2 913.7 1683.8 913.6 1684.5 913.7 1685.1 913.4 1685.7 913.4 1686.3 913.5 1686.9 913.5 1687.5 915.3 1688.1 913.2 1688.7 915.2 1689.3 913.8 1689.9 912.0 1690.5 913.1 1691.1 915.1 1691.7 913.3 1692.3 914.2 1692.9 913.3 1693.5 911.6 1694.1 913.3 1694.7 915.5 1695.4 913.4 1696.0 911.9 1696.6 913.8 1697.2 915.4 1697.8 913.3 1698.4 913.5 1699.0 913.3 1699.6 912.8 1700.2 913.1 1700.8 913.8 1701.4 913.8 1702.0 913.9 1702.6 913.6 1703.2 913.8 1703.8 913.5 1704.4 913.5 1705.0 912.8 1705.6 913.3 1706.3 912.6 1706.9 913.2 1707.5 913.4 1708.1 913.8 1708.7 914.1 1709.3 913.9 1709.9 913.3 1710.5 913.7 1711.1 913.3 1711.7 913.4 1712.3 913.4 1712.9 913.9 1713.5 913.5 1714.1 912.9 1714.7 913.6 1715.3 913.0 1715.9 913.2 1716.5 913.8 1717.2 913.7 1717.8 913.3 1718.4 913.8 1719.0 913.7 1719.6 913.2 1720.2 913.2 1720.8 913.7 1721.4 913.6 1722.0 913.2 1722.6 913.8 1723.2 913.7 1723.8 913.7 1724.4 913.3 1725.0 913.0 1725.6 913.9 1726.2 913.5 1726.8 913.6 1727.4 913.3 1728.1 913.5 1728.7 913.6 1729.3 913.8 1729.9 913.2 1730.5 914.2 1731.1 913.3 1731.7 913.1 1732.3 913.4 1732.9 913.2 1733.5 913.9 1734.1 913.6 1734.7 913.4 1735.3 913.7 1735.9 914.0 1736.5 913.4 1737.1 913.7 1737.7 913.0 1738.3 912.9 1738.9 913.0 1739.6 913.0 1740.2 913.3 1740.8 913.9 1741.4 913.7 1742.0 913.7 1742.6 913.6 1743.2 913.4 1743.8 913.5 1744.4 913.4 1745.0 913.0" fill="none" stroke="#0000ff" stroke-opacity="0.62" stroke-width="1.15"/><rect x="1126.8" y="831.0" width="618.7" height="142.2" fill="none" stroke="#000" stroke-width="2.1"/><text x="1093.6" y="836.8" textLength="28.9" lengthAdjust="spacingAndGlyphs">9000</text><text x="1093.6" y="871.8" textLength="28.9" lengthAdjust="spacingAndGlyphs">8500</text><text x="1093.6" y="906.8" textLength="28.9" lengthAdjust="spacingAndGlyphs">8000</text><text x="1093.6" y="941.8" textLength="28.9" lengthAdjust="spacingAndGlyphs">7500</text><text x="1093.6" y="976.8" textLength="28.9" lengthAdjust="spacingAndGlyphs">7000</text><text x="1124.7" y="987.8" textLength="7.2" lengthAdjust="spacingAndGlyphs">0</text><text x="1178.1" y="987.8" textLength="21.5" lengthAdjust="spacingAndGlyphs">100</text><text x="1238.7" y="987.8" textLength="21.5" lengthAdjust="spacingAndGlyphs">200</text><text x="1299.2" y="987.8" textLength="21.5" lengthAdjust="spacingAndGlyphs">300</text><text x="1359.8" y="987.8" textLength="21.5" lengthAdjust="spacingAndGlyphs">400</text><text x="1420.3" y="987.8" textLength="21.5" lengthAdjust="spacingAndGlyphs">500</text><text x="1480.9" y="987.8" textLength="21.5" lengthAdjust="spacingAndGlyphs">600</text><text x="1541.4" y="987.8" textLength="21.5" lengthAdjust="spacingAndGlyphs">700</text><text x="1602.0" y="987.8" textLength="21.5" lengthAdjust="spacingAndGlyphs">800</text><text x="1662.5" y="987.8" textLength="21.5" lengthAdjust="spacingAndGlyphs">900</text><text x="1719.5" y="987.8" textLength="28.6" lengthAdjust="spacingAndGlyphs">1000</text><rect x="1639.4" y="841.6" width="15" height="11" fill="#fff" stroke="#cfcfcf" stroke-width="1"/><rect x="1640.9" y="843.1" width="12" height="8" fill="#0000ff"/><text x="1658.3" y="851.0" fill="#000" textLength="79.1" lengthAdjust="spacingAndGlyphs">aida08 3.8.W</text><path d="M1744.4 820.8L1755.4 831.8L1744.4 842.8L1733.4 831.8Z" fill="#00ee00"/></svg>
<div class="w" style="left:7.2px;top:1009.5px;width:110.5px;height:19.1px;"></div>
<div class="w" style="left:123.4px;top:1009.5px;width:147.3px;height:19.1px;"></div>
<div class="w" style="left:275.4px;top:1009.5px;width:44.0px;height:19.1px;"></div>
<div class="w" style="left:324.6px;top:1009.5px;width:37.9px;height:19.1px;"></div>
<div class="w" style="left:367.4px;top:1009.5px;width:88.0px;height:19.1px;"></div>
<div class="w" style="left:461.5px;top:1009.5px;width:105.9px;height:19.1px;"></div>
<div class="w" style="left:573.4px;top:1009.5px;width:87.1px;height:19.1px;"></div>
<div class="w" style="left:1781.3px;top:1009.3px;width:119.3px;height:19.4px;"></div>
<div class="hr" style="top:1076px"></div>
<svg width="1920" height="1080"><path d="M572.0 260.9L575.6 264.7L579.2 260.9" fill="none" stroke="#1c1c1c" stroke-width="1.5"/><path d="M708.2 312.1L711.8 315.9L715.4 312.1" fill="none" stroke="#1c1c1c" stroke-width="1.5"/><path d="M1606.2 312.1L1609.9 315.9L1613.5 312.1" fill="none" stroke="#1c1c1c" stroke-width="1.5"/><path d="M134.5 345.9L138.1 349.7L141.7 345.9" fill="none" stroke="#1c1c1c" stroke-width="1.5"/><path d="M381.3 345.9L384.9 349.7L388.5 345.9" fill="none" stroke="#1c1c1c" stroke-width="1.5"/><path d="M596.6 345.9L600.2 349.7L603.8 345.9" fill="none" stroke="#1c1c1c" stroke-width="1.5"/><path d="M789.4 345.9L793.0 349.7L796.6 345.9" fill="none" stroke="#1c1c1c" stroke-width="1.5"/><path d="M1307.6 345.9L1311.2 349.7L1314.8 345.9" fill="none" stroke="#1c1c1c" stroke-width="1.5"/><path d="M1504.1 345.9L1507.7 349.7L1511.3 345.9" fill="none" stroke="#1c1c1c" stroke-width="1.5"/><path d="M128.6 423.0L132.2 426.8L135.8 423.0" fill="none" stroke="#1c1c1c" stroke-width="1.5"/><text x="10.8" y="20.3" font-family="Liberation Sans" font-size="15" fill="#2b2b2b" textLength="22.2" lengthAdjust="spacingAndGlyphs">File</text><text x="55.0" y="20.3" font-family="Liberation Sans" font-size="15" fill="#2b2b2b" textLength="24.5" lengthAdjust="spacingAndGlyphs">Edit</text><text x="101.5" y="20.3" font-family="Liberation Sans" font-size="15" fill="#2b2b2b" textLength="31.5" lengthAdjust="spacingAndGlyphs">View</text><text x="154.5" y="20.3" font-family="Liberation Sans" font-size="15" fill="#2b2b2b" textLength="47.2" lengthAdjust="spacingAndGlyphs">History</text><text x="223.2" y="20.3" font-family="Liberation Sans" font-size="15" fill="#2b2b2b" textLength="71.8" lengthAdjust="spacingAndGlyphs">Bookmarks</text><text x="317.0" y="20.3" font-family="Liberation Sans" font-size="15" fill="#2b2b2b" textLength="34.8" lengthAdjust="spacingAndGlyphs">Tools</text><text x="373.8" y="20.3" font-family="Liberation Sans" font-size="15" fill="#2b2b2b" textLength="30.0" lengthAdjust="spacingAndGlyphs">Help</text><text x="321.0" y="99.2" font-family="Liberation Sans" font-size="15" fill="#1f1f1f" textLength="61.0" lengthAdjust="spacingAndGlyphs">localhost</text><text x="382.0" y="99.2" font-family="Liberation Sans" font-size="15" fill="#6e6e6e" textLength="206.5" lengthAdjust="spacingAndGlyphs">:8015/Spectrum/Spectrum.tml</text><text x="1659.3" y="99.2" font-family="Liberation Sans" font-size="13" fill="#1f1f1f" textLength="22.7" lengthAdjust="spacingAndGlyphs">90%</text><text x="32.8" y="135.0" font-family="Liberation Sans" font-size="15" fill="#2b2b2b" textLength="43.6" lengthAdjust="spacingAndGlyphs">Centos</text><text x="109.5" y="135.0" font-family="Liberation Sans" font-size="15" fill="#2b2b2b" textLength="26.8" lengthAdjust="spacingAndGlyphs">Wiki</text><text x="169.5" y="135.0" font-family="Liberation Sans" font-size="15" fill="#2b2b2b" textLength="97.5" lengthAdjust="spacingAndGlyphs">Documentation</text><text x="300.0" y="135.0" font-family="Liberation Sans" font-size="15" fill="#2b2b2b" textLength="47.0" lengthAdjust="spacingAndGlyphs">Forums</text><text x="8.0" y="198.2" font-family="Liberation Serif" font-size="18.6" font-weight="bold" fill="#ff0000" textLength="368.5" lengthAdjust="spacingAndGlyphs">Spectrum Browser @ http aidas-gsi 8015</text><text x="1397.2" y="197.8" font-family="Liberation Serif" font-size="18.6" font-weight="bold" fill="#ff0000" textLength="236.3" lengthAdjust="spacingAndGlyphs">client address is 127.0.0.1</text><text x="377.6" y="267.1" font-family="Liberation Serif" font-size="16.8" fill="#ff0000" textLength="141.1" lengthAdjust="spacingAndGlyphs">Acquisition Servers</text><text x="1290.2" y="268.1" font-family="Liberation Serif" font-size="16.6" font-weight="bold" fill="#ff0000" textLength="274.2" lengthAdjust="spacingAndGlyphs">Current Acquisition Server aida08</text><text x="528.6" y="266.9" font-family="Liberation Sans" font-size="12.2" fill="#000" textLength="33.8" lengthAdjust="spacingAndGlyphs">aida08</text><text x="8.0" y="317.9" font-family="Liberation Serif" font-size="16.8" fill="#ff0000" textLength="121.5" lengthAdjust="spacingAndGlyphs">Spectrum Name:</text><text x="134.2" y="317.9" font-family="Liberation Sans" font-size="12.2" fill="#000" textLength="29.8" lengthAdjust="spacingAndGlyphs">3.8.W</text><text x="610.3" y="318.1" font-family="Liberation Sans" font-size="12.2" fill="#000" textLength="92.9" lengthAdjust="spacingAndGlyphs">Select a spectrum</text><text x="733.6" y="318.1" font-family="Liberation Sans" font-size="12.2" fill="#000" textLength="25.2" lengthAdjust="spacingAndGlyphs">multi</text><text x="1008.7" y="318.1" font-family="Liberation Sans" font-size="12.2" fill="#000" textLength="28.7" lengthAdjust="spacingAndGlyphs">Show</text><text x="1046.8" y="318.1" font-family="Liberation Sans" font-size="12.2" fill="#000" textLength="37.2" lengthAdjust="spacingAndGlyphs">Update</text><text x="1094.2" y="318.1" font-family="Liberation Sans" font-size="12.2" fill="#000" textLength="53.3" lengthAdjust="spacingAndGlyphs">Update All</text><text x="1157.0" y="318.1" font-family="Liberation Sans" font-size="12.2" fill="#000" textLength="24.5" lengthAdjust="spacingAndGlyphs">Zero</text><text x="1507.2" y="318.1" font-family="Liberation Sans" font-size="12.2" fill="#000" textLength="90.6" lengthAdjust="spacingAndGlyphs">Spectra functions</text><text x="1811.2" y="318.0" font-family="Liberation Sans" font-size="12.2" fill="#000" textLength="84.3" lengthAdjust="spacingAndGlyphs">What are these?</text><text x="12.1" y="351.9" font-family="Liberation Sans" font-size="12.2" fill="#000" textLength="75.8" lengthAdjust="spacingAndGlyphs">View functions</text><text x="248.7" y="351.9" font-family="Liberation Sans" font-size="12.2" fill="#000" textLength="91.4" lengthAdjust="spacingAndGlyphs">Arrange functions</text><text x="485.5" y="351.9" font-family="Liberation Sans" font-size="12.2" fill="#000" textLength="92.3" lengthAdjust="spacingAndGlyphs">Analysis functions</text><text x="722.2" y="351.9" font-family="Liberation Sans" font-size="12.2" fill="#000" textLength="58.1" lengthAdjust="spacingAndGlyphs">Tags &amp; Fits</text><text x="954.6" y="352.1" font-family="Liberation Serif" font-size="16.8" fill="#ff0000" textLength="63.3" lengthAdjust="spacingAndGlyphs">Channel:</text><text x="1195.5" y="351.9" font-family="Liberation Sans" font-size="12.2" fill="#000" textLength="103.9" lengthAdjust="spacingAndGlyphs">Number of Galleries</text><text x="1432.5" y="351.9" font-family="Liberation Sans" font-size="12.2" fill="#000" textLength="63.8" lengthAdjust="spacingAndGlyphs">Layout ID=7</text><text x="1811.2" y="352.0" font-family="Liberation Sans" font-size="12.2" fill="#000" textLength="84.3" lengthAdjust="spacingAndGlyphs">What are these?</text><text x="659.8" y="390.8" font-family="Liberation Sans" font-size="12.2" fill="#000" textLength="5.6" lengthAdjust="spacingAndGlyphs">x</text><text x="738.5" y="390.8" font-family="Liberation Sans" font-size="12.2" fill="#000" textLength="21.3" lengthAdjust="spacingAndGlyphs">new</text><text x="843.3" y="390.8" font-family="Liberation Sans" font-size="12.2" fill="#000" textLength="11.2" lengthAdjust="spacingAndGlyphs">all</text><text x="921.4" y="390.8" font-family="Liberation Sans" font-size="12.2" fill="#000" textLength="27.5" lengthAdjust="spacingAndGlyphs">linear</text><text x="1014.1" y="391.1" font-family="Liberation Serif" font-size="16.8" fill="#ff0000" textLength="38.6" lengthAdjust="spacingAndGlyphs">XMin</text><text x="1056.3" y="390.8" font-family="Liberation Sans" font-size="12.2" fill="#000" textLength="6.9" lengthAdjust="spacingAndGlyphs">0</text><text x="1162.8" y="391.1" font-family="Liberation Serif" font-size="16.8" fill="#ff0000" textLength="41.8" lengthAdjust="spacingAndGlyphs">XMax</text><text x="1208.1" y="390.8" font-family="Liberation Sans" font-size="12.2" fill="#000" textLength="25.4" lengthAdjust="spacingAndGlyphs">1019</text><text x="1335.5" y="391.1" font-family="Liberation Serif" font-size="16.8" fill="#ff0000" textLength="36.9" lengthAdjust="spacingAndGlyphs">YMin</text><text x="1376.5" y="390.8" font-family="Liberation Sans" font-size="12.2" fill="#000" textLength="26.4" lengthAdjust="spacingAndGlyphs">7000</text><text x="1522.5" y="391.1" font-family="Liberation Serif" font-size="16.8" fill="#ff0000" textLength="39.5" lengthAdjust="spacingAndGlyphs">YMax</text><text x="1565.3" y="390.8" font-family="Liberation Sans" font-size="12.2" fill="#000" textLength="26.4" lengthAdjust="spacingAndGlyphs">9000</text><text x="1811.2" y="390.9" font-family="Liberation Sans" font-size="12.2" fill="#000" textLength="84.3" lengthAdjust="spacingAndGlyphs">What are these?</text><text x="12.0" y="429.0" font-family="Liberation Sans" font-size="12.2" fill="#000" textLength="107.5" lengthAdjust="spacingAndGlyphs">Update Rate (8 secs)</text><text x="484.1" y="428.8" font-family="Liberation Sans" font-size="12.2" fill="#000" textLength="86.2" lengthAdjust="spacingAndGlyphs">Auto Update ON</text><text x="12.4" y="1023.1" font-family="Liberation Sans" font-size="12.2" fill="#000" textLength="101.4" lengthAdjust="spacingAndGlyphs">Empty Log Window</text><text x="128.6" y="1023.1" font-family="Liberation Sans" font-size="12.2" fill="#000" textLength="137.0" lengthAdjust="spacingAndGlyphs">Send Log Window to ELog</text><text x="280.5" y="1023.1" font-family="Liberation Sans" font-size="12.2" fill="#000" textLength="34.0" lengthAdjust="spacingAndGlyphs">Reload</text><text x="329.5" y="1023.1" font-family="Liberation Sans" font-size="12.2" fill="#000" textLength="28.2" lengthAdjust="spacingAndGlyphs">Reset</text><text x="372.3" y="1023.1" font-family="Liberation Sans" font-size="12.2" fill="#000" textLength="78.6" lengthAdjust="spacingAndGlyphs">Show Variables</text><text x="465.8" y="1023.1" font-family="Liberation Sans" font-size="12.2" fill="#000" textLength="97.5" lengthAdjust="spacingAndGlyphs">Show Log Window</text><text x="577.6" y="1023.1" font-family="Liberation Sans" font-size="12.2" fill="#000" textLength="78.7" lengthAdjust="spacingAndGlyphs">Enable Logging</text><text x="1785.9" y="1022.9" font-family="Liberation Sans" font-size="12.2" fill="#000" textLength="109.9" lengthAdjust="spacingAndGlyphs">How to use this page</text><text x="1580.6" y="1057.1" font-family="Liberation Serif" font-size="16.8" fill="#ff0000" textLength="319.7" lengthAdjust="spacingAndGlyphs">Last Updated: November 18, 2023 04:14:48</text></svg>
<svg width="1920" height="1080" style="position:absolute;left:0;top:0"><defs>
<radialGradient id="gy" cx="50%" cy="35%" r="65%"><stop offset="0" stop-color="#fff6a0"/><stop offset="0.5" stop-color="#f2d000"/><stop offset="1" stop-color="#c89600"/></radialGradient>
<radialGradient id="gk" cx="50%" cy="30%" r="70%"><stop offset="0" stop-color="#5a5a5a"/><stop offset="0.6" stop-color="#111"/><stop offset="1" stop-color="#000"/></radialGradient>
<linearGradient id="gb" x1="0" y1="0" x2="0" y2="1"><stop offset="0" stop-color="#8cc8f8"/><stop offset="0.5" stop-color="#3d94e6"/><stop offset="1" stop-color="#1160c8"/></linearGradient>
<radialGradient id="gbc" cx="60%" cy="50%" r="60%"><stop offset="0" stop-color="#30b4ff"/><stop offset="0.7" stop-color="#1a98ec"/><stop offset="1" stop-color="#0a6ccc"/></radialGradient>
<linearGradient id="ggh" x1="0" y1="0" x2="1" y2="0"><stop offset="0" stop-color="#5ea600"/><stop offset="0.45" stop-color="#8cc40a"/><stop offset="1" stop-color="#e2ec80"/></linearGradient>
<linearGradient id="ggr" x1="0" y1="0" x2="0" y2="1"><stop offset="0" stop-color="#d6e890"/><stop offset="0.45" stop-color="#a8d040"/><stop offset="0.55" stop-color="#80bc10"/><stop offset="1" stop-color="#70b000"/></linearGradient>
<linearGradient id="ggu" x1="0" y1="0" x2="0" y2="1"><stop offset="0" stop-color="#d2e474"/><stop offset="0.5" stop-color="#b4d840"/><stop offset="0.6" stop-color="#80c010"/><stop offset="1" stop-color="#60a800"/></linearGradient>
<linearGradient id="ggd" x1="0" y1="0" x2="1" y2="0"><stop offset="0" stop-color="#e4f0a8"/><stop offset="0.5" stop-color="#c4dc70"/><stop offset="0.52" stop-color="#84c010"/><stop offset="1" stop-color="#6cb000"/></linearGradient>
<radialGradient id="gsh" cx="50%" cy="50%" r="50%"><stop offset="0" stop-color="#000" stop-opacity="0.28"/><stop offset="1" stop-color="#000" stop-opacity="0"/></radialGradient>
<radialGradient id="gglass" cx="45%" cy="40%" r="60%"><stop offset="0" stop-color="#ffffff"/><stop offset="0.7" stop-color="#f0f0f0"/><stop offset="1" stop-color="#d8d8d8"/></radialGradient>
</defs><ellipse cx="21.4" cy="399" rx="9" ry="1.6" fill="url(#gsh)"/><circle cx="21.4" cy="387.3" r="11.7" fill="url(#gy)"/><path d="M21.4 387.3L33.10 387.30A11.7 11.7 0 0 0 27.25 377.17Z" fill="url(#gk)"/><path d="M21.4 387.3L15.55 377.17A11.7 11.7 0 0 0 9.70 387.30Z" fill="url(#gk)"/><path d="M21.4 387.3L15.55 397.43A11.7 11.7 0 0 0 27.25 397.43Z" fill="url(#gk)"/><path d="M10.0 387.1H32.8" stroke="#101030" stroke-width="0.9" opacity="0.8"/><circle cx="21.4" cy="387.3" r="11.299999999999999" fill="none" stroke="#3a3000" stroke-width="0.8" opacity="0.6"/><ellipse cx="21.4" cy="380.3" rx="7" ry="3.2" fill="#fff" opacity="0.28"/><ellipse cx="78.1" cy="398.5" rx="10" ry="1.5" fill="url(#gsh)"/><path d="M73.78 378.48A9.2 9.2 0 0 0 76.82 395.71" fill="none" stroke="#1a68c8" stroke-width="4.9"/><path d="M73.78 378.48A9.2 9.2 0 0 0 76.82 395.71" fill="none" stroke="url(#gb)" stroke-width="3.3"/><path d="M81.55 378.07A9.2 9.2 0 0 1 82.42 394.72" fill="none" stroke="#1a68c8" stroke-width="4.9"/><path d="M81.55 378.07A9.2 9.2 0 0 1 82.42 394.72" fill="none" stroke="url(#gb)" stroke-width="3.3"/><path d="M68.3 375.6H77.8V385.3Z" fill="#5aaaf0" stroke="#1a68c8" stroke-width="1" stroke-linejoin="round"/><path d="M79 389V397.8H88Z" fill="#1c72d8" stroke="#1260c0" stroke-width="1" stroke-linejoin="round"/><ellipse cx="163.6" cy="398.3" rx="9" ry="1.5" fill="url(#gsh)"/><path d="M164.6 388.6L173.79999999999998 396.70000000000005" stroke="#000" stroke-width="3.6" stroke-linecap="round"/><path d="M165.2 388.3L173.6 395.70000000000005" stroke="#fff" stroke-width="0.8" opacity="0.7"/><circle cx="158.6" cy="382.1" r="6.9" fill="url(#gglass)" stroke="#b4b4b4" stroke-width="2.4"/><circle cx="158.6" cy="382.1" r="5.4" fill="none" stroke="#e6e6e6" stroke-width="0.8"/><ellipse cx="220.3" cy="398.3" rx="9" ry="1.5" fill="url(#gsh)"/><path d="M221.3 388.6L230.5 396.70000000000005" stroke="#000" stroke-width="3.6" stroke-linecap="round"/><path d="M221.9 388.3L230.3 395.70000000000005" stroke="#fff" stroke-width="0.8" opacity="0.7"/><circle cx="215.3" cy="382.1" r="6.9" fill="url(#gglass)" stroke="#b4b4b4" stroke-width="2.4"/><circle cx="215.3" cy="382.1" r="5.4" fill="none" stroke="#e6e6e6" stroke-width="0.8"/><path d="M169.7 373.7V384.90000000000003M164.1 379.3H175.29999999999998" stroke="#4e9a06" stroke-width="3.6" stroke-linecap="round"/><path d="M169.7 374.0V384.6M164.39999999999998 379.3H175.0" stroke="#b8dc28" stroke-width="1.8" stroke-linecap="round"/><rect x="220.3" y="377.2" width="11.8" height="3.8" rx="1" fill="#e84040" stroke="#b00000" stroke-width="0.9"/><path d="M221.5 378.2H231" stroke="#ff9a9a" stroke-width="0.8"/><circle cx="276.3" cy="386.3" r="11.3" fill="url(#gbc)" stroke="#0a5cc0" stroke-width="0.8"/><circle cx="276.3" cy="386.3" r="9.8" fill="none" stroke="#9ad8ff" stroke-width="0.7" opacity="0.8"/><path d="M272.6 380.1H279.0L275.8 386.8Z M272.6 386.3H279.0L275.8 393.2Z" fill="#383838"/><circle cx="334.2" cy="386.3" r="11.3" fill="url(#gbc)" stroke="#0a5cc0" stroke-width="0.8"/><circle cx="334.2" cy="386.3" r="9.8" fill="none" stroke="#9ad8ff" stroke-width="0.7" opacity="0.8"/><path d="M331.0 386.2H338.2L334.59999999999997 379.6Z M331.0 392.7H338.2L334.59999999999997 386.0Z" fill="#383838"/><path d="M378.9 386.8L389.6 377.1V381.1H401.9V392.7H389.6V396.4Z" fill="url(#ggh)" stroke="#4e9a06" stroke-width="1.1" stroke-linejoin="round"/><ellipse cx="448" cy="395.8" rx="12" ry="1.4" fill="url(#gsh)"/><path d="M461.6 385.5L447.7 375.4V380.1H434.1V390.7H447.7V395.2Z" fill="url(#ggr)" stroke="#4e9a06" stroke-width="1.1" stroke-linejoin="round"/><ellipse cx="504.5" cy="398.5" rx="9" ry="1.4" fill="url(#gsh)"/><path d="M504.5 374.7L513.7 385.3H509.7V398.2H498.8V385.3H495.1Z" fill="url(#ggu)" stroke="#4e9a06" stroke-width="1.1" stroke-linejoin="round"/><path d="M560.2 400.6L569.6 387.3H565.4V372.9H555V387.3H550Z" fill="url(#ggd)" stroke="#4e9a06" stroke-width="1.1" stroke-linejoin="round"/></svg><svg width="1920" height="1080" style="position:absolute;left:0;top:0"><rect x="1801" y="161" width="58" height="57.7" fill="#f5c400"/><circle cx="1809.4" cy="167" r="5.3" fill="#10306a"/><path d="M1809.4 163.6L1812.6 168.8H1806.2Z" fill="#e8f0ff"/><path d="M1845.8 162.4H1853.8V167.5Q1853.8 170.5 1849.8 172Q1845.8 170.5 1845.8 167.5Z" fill="#1a3cb0"/><path d="M1848 165H1851.5M1848 167.5H1851.5" stroke="#fff" stroke-width="0.9"/><text x="1803" y="193.5" font-family="Liberation Serif" font-weight="bold" font-size="27" fill="#000" textLength="26" lengthAdjust="spacingAndGlyphs">M</text><text x="1826.3" y="191.3" font-family="Liberation Serif" font-weight="bold" font-size="15" fill="#000" textLength="30.8" lengthAdjust="spacingAndGlyphs">idas</text><text x="1805" y="202.5" font-family="Liberation Sans" font-weight="bold" font-size="4.6" fill="#000" textLength="18" lengthAdjust="spacingAndGlyphs">powered by</text><rect x="1831.2" y="197" width="12.4" height="18.8" fill="#d02a10"/><path d="M1838.8 199.5Q1836.5 200.5 1836 204Q1835.8 209 1836.8 213Q1837.6 208 1838 204Q1838.3 201.5 1838.8 199.5Z" fill="#3050c8"/><path d="M1833 200.5Q1832.8 202 1833 203M1840.5 201Q1840.3 202 1840 203" stroke="#f0c000" stroke-width="0.8"/><path d="M1832.5 214H1842" stroke="#f0d0c0" stroke-width="0.8" stroke-dasharray="1 0.5"/><path d="M1864.2 210.2L1895.8 210.6L1895.4 218.5L1864 218Z" fill="#0a3cc0"/><text x="1869" y="217" font-family="Liberation Sans" font-weight="bold" font-size="6.5" fill="#e8e030" textLength="23" lengthAdjust="spacingAndGlyphs">POWERED</text><path d="M1867.5 162L1880 161.6L1884 160.8L1899 162.8L1898.4 209.5L1866.6 210.2Z" fill="#d43500"/><path d="M1899 169.5L1900.6 170.5L1899 196Z" fill="#1040c0"/><path d="M1888.2 166.2Q1883 167 1879.8 172.5Q1877.2 178 1877.6 185L1877 186.5L1878.2 188Q1878 194 1879.5 199L1878.8 200.5L1880.3 202Q1881.2 205 1882.3 207.5Q1883.2 201 1884.2 194L1885.4 193L1884.6 191.5Q1885.6 184 1885.6 178.5L1886.8 177L1886 175.5Q1886.6 171 1888.2 166.2Z" fill="#1a44b8"/><path d="M1883.5 176Q1881.3 190 1882.4 206" stroke="#e0e4ff" stroke-width="0.7" fill="none"/><path d="M1875 166Q1873.5 170 1874 174M1877.5 165Q1876 169 1876.5 172M1889.5 171Q1889 174 1888.5 176M1891.5 170.5Q1891.3 172 1891 173" stroke="#ffc000" stroke-width="1.3" fill="none"/><text x="1868.5" y="206.5" font-family="Liberation Sans" font-weight="bold" font-size="6.5" fill="#f4e8e0" textLength="13" lengthAdjust="spacingAndGlyphs">TCL</text></svg>
</body></html>
